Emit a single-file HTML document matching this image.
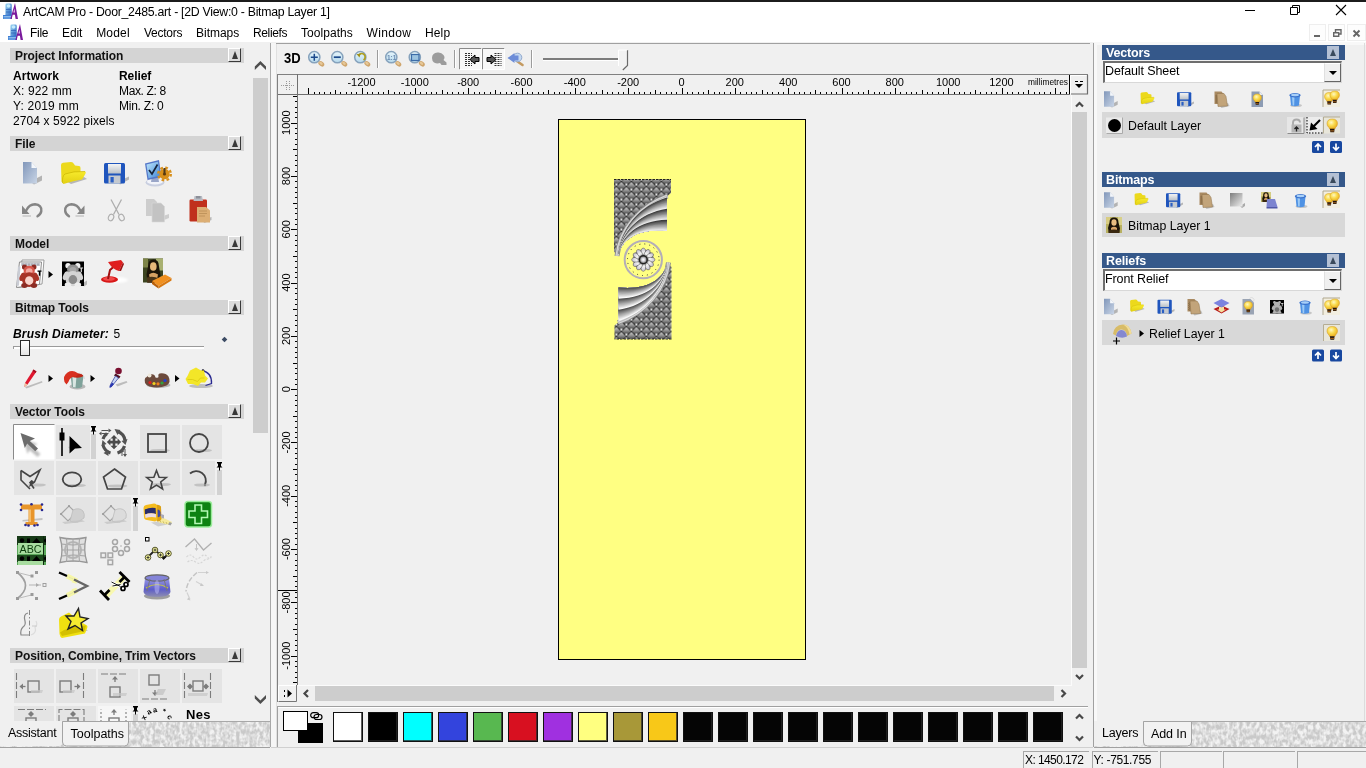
<!DOCTYPE html><html><head><meta charset="utf-8"><title>ArtCAM Pro - Door_2485.art</title><style>
*{box-sizing:border-box;margin:0;padding:0}
html,body{width:1366px;height:768px;overflow:hidden;background:#f0f0f0;font-family:"Liberation Sans",sans-serif;color:#000}
.a{position:absolute}
.t{position:absolute;white-space:nowrap;line-height:1}
svg{position:absolute;overflow:visible}
.hdr{position:absolute;height:15px;background:#d4d4d4;font-weight:bold;font-size:12px;line-height:17px;overflow:hidden;padding-left:5px;color:#111;letter-spacing:-0.1px}
.hdrb{position:absolute;height:15px;background:#35588a;font-weight:bold;font-size:12.5px;line-height:16.500px;overflow:hidden;padding-left:4px;color:#fff;letter-spacing:-0.15px}
.cb{position:absolute;width:13px;height:14px;background:#dcdcdc;border-right:1px solid #3a3a3a;border-bottom:1px solid #3a3a3a;border-top:1px solid #fff;border-left:1px solid #fff}
.cb:after{content:"";position:absolute;left:2.500px;top:2px;border-left:3.5px solid transparent;border-right:3.5px solid transparent;border-bottom:8px solid #383838}
.cbb{position:absolute;width:12px;height:13px;background:#b4c0d4}
.cbb:after{content:"";position:absolute;left:2.500px;top:2.500px;border-left:3.5px solid transparent;border-right:3.5px solid transparent;border-bottom:7.500px solid #3a4a5c}
.combo{position:absolute;height:22px;background:#fff;border-top:2px solid #6e6e6e;border-left:2px solid #6e6e6e;border-right:1px solid #d8d8d8;border-bottom:1px solid #d8d8d8}
.dd{position:absolute;width:17px;height:19px;background:#f0f0f0;border-right:1.500px solid #666;border-bottom:1.500px solid #666;border-top:1px solid #fff;border-left:1px solid #e0e0e0}
.dd:after{content:"";position:absolute;left:4px;top:7px;border-left:4px solid transparent;border-right:4px solid transparent;border-top:4px solid #000}
.sp{position:absolute;height:17px;top:751px;border-top:1px solid #a8a8a8;border-left:1px solid #a8a8a8;background:#f0f0f0}
</style></head><body><div id="root" style="position:absolute;left:0;top:0;width:1366px;height:768px;will-change:transform">
<div class="a" style="left:0px;top:0px;width:1366px;height:42px;background:#fff;"></div>
<div class="a" style="left:0px;top:0px;width:1366px;height:2px;background:#1c1c1c;"></div>
<div class="t" style="left:23px;top:6px;font-size:12.3px;letter-spacing:-0.274px;">ArtCAM Pro - Door_2485.art - [2D View:0 - Bitmap Layer 1]</div>
<svg style="left:2.500px;top:3px" width="16" height="16"><defs><linearGradient id="gApp" x1="0" y1="0" x2="1" y2="1"><stop offset="0" stop-color="#9cd8f4"/><stop offset="1" stop-color="#2a62c0"/></linearGradient></defs><path d="M3.800 0.500h3.600q1.400 0 1.400 1.400v10.600h-6.400v-10.600q0-1.400 1.400-1.400z" fill="url(#gApp)"/><ellipse cx="5.600" cy="3" rx="1.900" ry="1.700" fill="#c4ecfc"/><path d="M3 6.500h5M3 9h5" stroke="#2a5cb0" stroke-width=".7"/><rect x="0" y="12" width="9" height="4" fill="#3c7cd4"/><path d="M0.500 13.500h8M0.500 15h8" stroke="#a8d4f4" stroke-width=".7"/><path d="M7.300 16l4.700-16 3 16h-2.400l-0.700-4.200h-2.200l-1 4.200z M10.500 9.500h1.300l-0.500-4z" fill="#7a1a9c" fill-rule="evenodd"/></svg>
<svg style="left:7.500px;top:24px" width="16" height="16"><path d="M3.800 0.500h3.600q1.400 0 1.400 1.400v10.600h-6.400v-10.600q0-1.400 1.400-1.400z" fill="url(#gApp)"/><ellipse cx="5.600" cy="3" rx="1.900" ry="1.700" fill="#c4ecfc"/><path d="M3 6.500h5M3 9h5" stroke="#2a5cb0" stroke-width=".7"/><rect x="0" y="12" width="9" height="4" fill="#3c7cd4"/><path d="M0.500 13.500h8M0.500 15h8" stroke="#a8d4f4" stroke-width=".7"/><path d="M7.300 16l4.700-16 3 16h-2.400l-0.700-4.200h-2.200l-1 4.200z M10.500 9.500h1.300l-0.500-4z" fill="#7a1a9c" fill-rule="evenodd"/></svg>
<div class="a" style="left:1245px;top:10px;width:10px;height:1px;background:#000;"></div>
<svg style="left:1290px;top:5px" width="10" height="10"><path d="M0.5 2.5h7v7h-7z M2.5 2.500v-2h7v7h-2" fill="none" stroke="#000" stroke-width="1"/></svg>
<svg style="left:1336px;top:5px" width="10" height="10"><path d="M0 0L10 10M10 0L0 10" stroke="#000" stroke-width="1.100"/></svg>
<div class="t" style="left:30px;top:26.5px;font-size:12px;letter-spacing:-0.284px;">File</div>
<div class="t" style="left:62px;top:26.5px;font-size:12px;letter-spacing:-0.095px;">Edit</div>
<div class="t" style="left:96.2px;top:26.5px;font-size:12px;letter-spacing:0.183px;">Model</div>
<div class="t" style="left:144px;top:26.5px;font-size:12px;letter-spacing:-0.260px;">Vectors</div>
<div class="t" style="left:196px;top:26.5px;font-size:12px;letter-spacing:-0.021px;">Bitmaps</div>
<div class="t" style="left:253px;top:26.5px;font-size:12px;letter-spacing:-0.369px;">Reliefs</div>
<div class="t" style="left:301px;top:26.5px;font-size:12px;letter-spacing:0.048px;">Toolpaths</div>
<div class="t" style="left:366.6px;top:26.5px;font-size:12px;letter-spacing:0.320px;">Window</div>
<div class="t" style="left:425px;top:26.5px;font-size:12px;letter-spacing:0.130px;">Help</div>
<div class="a" style="left:1309px;top:24px;width:17px;height:17px;background:#fdfdfd;border:1px solid #eeeeee"></div>
<div class="a" style="left:1328px;top:24px;width:17px;height:17px;background:#fdfdfd;border:1px solid #eeeeee"></div>
<div class="a" style="left:1347px;top:24px;width:19px;height:17px;background:#fdfdfd;border:1px solid #eeeeee"></div>
<div class="a" style="left:1314px;top:35px;width:6px;height:2px;background:#666;"></div>
<svg style="left:1333px;top:29px" width="9" height="8"><path d="M0.7 3.700h5v3.600h-5z M2.500 3v-2.300h5.500v4.300h-2" fill="none" stroke="#666" stroke-width="1.400"/></svg>
<svg style="left:1353px;top:30px" width="7" height="7"><path d="M0.500 0.500L6.500 6.500M6.500 0.500L0.500 6.500" stroke="#666" stroke-width="1.900"/></svg>
<div class="a" style="left:0px;top:42px;width:270px;height:705px;background:#f0f0f0;"></div>
<div class="a" style="left:270px;top:43px;width:1px;height:704px;background:#a8a8a8;"></div>
<div class="a" style="left:271px;top:43px;width:5px;height:704px;background:#f6f6f6;"></div>
<div class="hdr" style="left:10px;top:48px;width:234px">Project Information</div>
<div class="cb" style="left:228px;top:48px"></div>
<div class="t" style="left:13px;top:70px;font-size:12px;letter-spacing:0.109px;;font-weight:bold">Artwork</div>
<div class="t" style="left:119px;top:70px;font-size:12px;letter-spacing:-0.063px;;font-weight:bold">Relief</div>
<div class="t" style="left:13px;top:85px;font-size:12px;letter-spacing:0.087px;">X: 922 mm</div>
<div class="t" style="left:119px;top:85px;font-size:12px;letter-spacing:-0.368px;">Max. Z: 8</div>
<div class="t" style="left:13px;top:100px;font-size:12px;letter-spacing:0.177px;">Y: 2019 mm</div>
<div class="t" style="left:119px;top:100px;font-size:12px;letter-spacing:-0.242px;">Min. Z: 0</div>
<div class="t" style="left:13px;top:115px;font-size:12px;letter-spacing:0.085px;">2704 x 5922 pixels</div>
<div class="hdr" style="left:10px;top:136px;width:234px">File</div>
<div class="cb" style="left:228px;top:136px"></div>
<div class="hdr" style="left:10px;top:236px;width:234px">Model</div>
<div class="cb" style="left:228px;top:236px"></div>
<div class="hdr" style="left:10px;top:300px;width:234px">Bitmap Tools</div>
<div class="cb" style="left:228px;top:300px"></div>
<div class="t" style="left:13px;top:327.5px;font-size:12px;font-weight:bold;font-style:italic;letter-spacing:0.17px">Brush Diameter:</div>
<div class="t" style="left:113.5px;top:327.5px;font-size:12px;">5</div>
<div class="a" style="left:13px;top:346px;width:191px;height:1px;background:#9a9a9a;"></div>
<div class="a" style="left:13px;top:347px;width:191px;height:2px;background:#fff;"></div>
<div class="a" style="left:13px;top:346px;width:1px;height:3px;background:#9a9a9a;"></div>
<div class="a" style="left:20px;top:340px;width:10px;height:16px;background:#f8f8f8;border:1px solid #2a2a2a;background:linear-gradient(#fff,#e4e4e4)"></div>
<div class="a" style="left:222px;top:337px;width:5px;height:5px;background:#3c4c64;transform:rotate(45deg) scale(.8)"></div>
<div class="hdr" style="left:10px;top:404px;width:234px">Vector Tools</div>
<div class="cb" style="left:228px;top:404px"></div>
<div class="hdr" style="left:10px;top:648px;width:234px">Position, Combine, Trim Vectors</div>
<div class="cb" style="left:228px;top:648px"></div>
<div class="a" style="left:253px;top:78px;width:15px;height:355px;background:#cdcdcd;"></div>
<svg style="left:0;top:0" width="280" height="768"><path d="M260.400 61L266 66.600V70L260.400 64.600L254.800 70V66.600z" fill="#4e4e4e"/><path d="M260.400 704L266 698.400V695L260.400 700.400L254.800 695V698.400z" fill="#4e4e4e"/></svg>
<div class="a" style="left:276px;top:43px;width:814px;height:1px;background:#a0a0a0;"></div>
<div class="a" style="left:276px;top:44px;width:1px;height:703px;background:#e0e0e0;"></div>
<div class="t" style="left:284px;top:50px;font-size:15.5px;font-weight:bold;transform:scaleX(.84);transform-origin:0 0">3D</div>
<div class="a" style="left:277px;top:74px;width:811px;height:1px;background:#808080;"></div>
<div class="a" style="left:277px;top:94px;width:793px;height:1px;background:#707070;"></div>
<div class="a" style="left:277px;top:74px;width:1px;height:628px;background:#808080;"></div>
<div class="a" style="left:297px;top:74px;width:1px;height:611px;background:#707070;"></div>
<div class="a" style="left:298px;top:95px;width:773px;height:590px;background:#f0f0f0;"></div>
<div class="a" style="left:558px;top:119px;width:248px;height:541px;background:#ffff82;border:1px solid #000"></div>
<div class="a" style="left:1071px;top:95px;width:1px;height:591px;background:#fbfbfb;"></div>
<div class="a" style="left:298px;top:685px;width:774px;height:1px;background:#fbfbfb;"></div>
<div class="a" style="left:1072px;top:112px;width:15px;height:556px;background:#cdcdcd;"></div>
<div class="a" style="left:315px;top:686px;width:739px;height:15px;background:#cdcdcd;"></div>
<div class="a" style="left:277px;top:706px;width:811px;height:1px;background:#a0a0a0;"></div>
<div class="a" style="left:277px;top:707px;width:811px;height:1px;background:#fff;"></div>
<div class="a" style="left:277px;top:706px;width:1px;height:41px;background:#a0a0a0;"></div>
<div class="a" style="left:271px;top:747px;width:822px;height:1px;background:#d0d0d0;"></div>
<div class="a" style="left:298px;top:723px;width:25px;height:20px;background:#000;"></div>
<div class="a" style="left:283px;top:711px;width:25px;height:20px;background:#fff;border:1px solid #000"></div>
<svg style="left:310px;top:712px" width="14" height="9"><rect x="0.700" y="0.700" width="8" height="5" rx="2.500" fill="none" stroke="#000" stroke-width="1.200"/><rect x="4" y="2.500" width="8" height="5" rx="2.500" fill="none" stroke="#000" stroke-width="1.200"/></svg>
<div class="a" style="left:333px;top:712px;width:30px;height:30px;background:#ffffff;border:1px solid #111;box-shadow:inset -1px -1px 0 rgba(40,40,40,.75)"></div>
<div class="a" style="left:368px;top:712px;width:30px;height:30px;background:#000000;border:1px solid #111;box-shadow:inset -1px -1px 0 rgba(40,40,40,.75)"></div>
<div class="a" style="left:403px;top:712px;width:30px;height:30px;background:#00ffff;border:1px solid #111;box-shadow:inset -1px -1px 0 rgba(40,40,40,.75)"></div>
<div class="a" style="left:438px;top:712px;width:30px;height:30px;background:#3344dd;border:1px solid #111;box-shadow:inset -1px -1px 0 rgba(40,40,40,.75)"></div>
<div class="a" style="left:473px;top:712px;width:30px;height:30px;background:#58b850;border:1px solid #111;box-shadow:inset -1px -1px 0 rgba(40,40,40,.75)"></div>
<div class="a" style="left:508px;top:712px;width:30px;height:30px;background:#d81020;border:1px solid #111;box-shadow:inset -1px -1px 0 rgba(40,40,40,.75)"></div>
<div class="a" style="left:543px;top:712px;width:30px;height:30px;background:#a030e0;border:1px solid #111;box-shadow:inset -1px -1px 0 rgba(40,40,40,.75)"></div>
<div class="a" style="left:578px;top:712px;width:30px;height:30px;background:#ffff80;border:1px solid #111;box-shadow:inset -1px -1px 0 rgba(40,40,40,.75)"></div>
<div class="a" style="left:613px;top:712px;width:30px;height:30px;background:#a89838;border:1px solid #111;box-shadow:inset -1px -1px 0 rgba(40,40,40,.75)"></div>
<div class="a" style="left:648px;top:712px;width:30px;height:30px;background:#f8c818;border:1px solid #111;box-shadow:inset -1px -1px 0 rgba(40,40,40,.75)"></div>
<div class="a" style="left:683px;top:712px;width:30px;height:30px;background:#050505;border:1px solid #111;box-shadow:inset -1px -1px 0 rgba(40,40,40,.75)"></div>
<div class="a" style="left:718px;top:712px;width:30px;height:30px;background:#050505;border:1px solid #111;box-shadow:inset -1px -1px 0 rgba(40,40,40,.75)"></div>
<div class="a" style="left:753px;top:712px;width:30px;height:30px;background:#050505;border:1px solid #111;box-shadow:inset -1px -1px 0 rgba(40,40,40,.75)"></div>
<div class="a" style="left:788px;top:712px;width:30px;height:30px;background:#050505;border:1px solid #111;box-shadow:inset -1px -1px 0 rgba(40,40,40,.75)"></div>
<div class="a" style="left:823px;top:712px;width:30px;height:30px;background:#050505;border:1px solid #111;box-shadow:inset -1px -1px 0 rgba(40,40,40,.75)"></div>
<div class="a" style="left:858px;top:712px;width:30px;height:30px;background:#050505;border:1px solid #111;box-shadow:inset -1px -1px 0 rgba(40,40,40,.75)"></div>
<div class="a" style="left:893px;top:712px;width:30px;height:30px;background:#050505;border:1px solid #111;box-shadow:inset -1px -1px 0 rgba(40,40,40,.75)"></div>
<div class="a" style="left:928px;top:712px;width:30px;height:30px;background:#050505;border:1px solid #111;box-shadow:inset -1px -1px 0 rgba(40,40,40,.75)"></div>
<div class="a" style="left:963px;top:712px;width:30px;height:30px;background:#050505;border:1px solid #111;box-shadow:inset -1px -1px 0 rgba(40,40,40,.75)"></div>
<div class="a" style="left:998px;top:712px;width:30px;height:30px;background:#050505;border:1px solid #111;box-shadow:inset -1px -1px 0 rgba(40,40,40,.75)"></div>
<div class="a" style="left:1033px;top:712px;width:30px;height:30px;background:#050505;border:1px solid #111;box-shadow:inset -1px -1px 0 rgba(40,40,40,.75)"></div>
<div class="a" style="left:1094px;top:42px;width:272px;height:3px;background:#f8f8f8;"></div>
<div class="a" style="left:1093px;top:43px;width:1px;height:704px;background:#a0a0a0;"></div>
<div class="a" style="left:1094px;top:43px;width:3px;height:704px;background:#f8f8f8;"></div>
<div class="a" style="left:1364px;top:43px;width:1px;height:678px;background:#dcdcdc;"></div>
<div class="hdrb" style="left:1102px;top:45px;width:243px">Vectors</div>
<div class="cbb" style="left:1327px;top:46px"></div>
<div class="hdrb" style="left:1102px;top:172px;width:243px">Bitmaps</div>
<div class="cbb" style="left:1327px;top:173px"></div>
<div class="hdrb" style="left:1102px;top:253px;width:243px">Reliefs</div>
<div class="cbb" style="left:1327px;top:254px"></div>
<div class="combo" style="left:1103px;top:61px;width:239px"></div>
<div class="dd" style="left:1324px;top:63px"></div>
<div class="t" style="left:1105px;top:65px;font-size:12.5px;letter-spacing:-0.1px">Default Sheet</div>
<div class="combo" style="left:1103px;top:269px;width:239px"></div>
<div class="dd" style="left:1324px;top:271px"></div>
<div class="t" style="left:1105px;top:273px;font-size:12.5px;letter-spacing:-0.1px">Front Relief</div>
<div class="a" style="left:1102px;top:112px;width:243px;height:26px;background:#d8d8d8;"></div>
<div class="t" style="left:1128px;top:120px;font-size:12.3px;">Default Layer</div>
<div class="a" style="left:1102px;top:213px;width:243px;height:24px;background:#d8d8d8;"></div>
<div class="t" style="left:1128px;top:220px;font-size:12.3px;">Bitmap Layer 1</div>
<div class="a" style="left:1102px;top:320px;width:243px;height:25px;background:#d8d8d8;"></div>
<div class="t" style="left:1149px;top:328px;font-size:12.3px;">Relief Layer 1</div>
<svg style="left:0;top:0" width="1366" height="768"><defs><filter id="noise" x="0" y="0" width="100%" height="100%"><feTurbulence type="fractalNoise" baseFrequency="0.3 0.2" numOctaves="2" seed="3"/><feColorMatrix type="matrix" values="0 0 0 0 0.89  0 0 0 0 0.89  0 0 0 0 0.89  2 2 0 0 -1.55"/><feComposite in2="SourceGraphic" operator="in"/></filter></defs><rect x="0" y="721" width="270" height="26" fill="#c9c9c9"/><rect x="0" y="721" width="270" height="26" fill="#c4c4c4" filter="url(#noise)"/><rect x="0" y="721" width="270" height="1" fill="#a8a8a8"/><rect x="1094" y="721" width="272" height="26" fill="#c9c9c9"/><rect x="1094" y="721" width="272" height="26" fill="#c4c4c4" filter="url(#noise)"/><rect x="1094" y="721" width="272" height="1" fill="#a8a8a8"/><path d="M0 721h62.500v21q0 4-4 4h-58.500z" fill="#f0f0f0"/><path d="M62.500 721.500h66v20.500q0 4-4 4h-58q-4 0-4-4z" fill="#f2f2f2" stroke="#a4a4a4"/><path d="M1094 721h49.500v21q0 4-4 4h-45.500z" fill="#f0f0f0"/><path d="M1143.500 721.500h48v20.500q0 4-4 4h-40q-4 0-4-4z" fill="#f2f2f2" stroke="#a4a4a4"/><rect x="0" y="747" width="270" height="1" fill="#a0a0a0"/><rect x="1094" y="747" width="272" height="1" fill="#a0a0a0"/></svg>
<div class="t" style="left:8px;top:727px;font-size:12.5px;letter-spacing:-0.25px">Assistant</div>
<div class="t" style="left:70.5px;top:728px;font-size:12.5px;letter-spacing:0px">Toolpaths</div>
<div class="t" style="left:1102px;top:727px;font-size:12.5px;letter-spacing:-0.2px">Layers</div>
<div class="t" style="left:1151px;top:728px;font-size:12.5px;letter-spacing:-0.1px">Add In</div>
<div class="a" style="left:0px;top:748px;width:1366px;height:20px;background:#f0f0f0;"></div>
<div class="sp" style="left:1023px;width:66px"></div>
<div class="sp" style="left:1092px;width:66px"></div>
<div class="sp" style="left:1160px;width:62px"></div>
<div class="sp" style="left:1223px;width:72px"></div>
<div class="sp" style="left:1297px;width:69px"></div>
<div class="t" style="left:1025px;top:754px;font-size:12px;letter-spacing:-0.584px;">X: 1450.172</div>
<div class="t" style="left:1093.5px;top:754px;font-size:12px;letter-spacing:-0.344px;">Y: -751.755</div>
<svg style="left:0;top:0" width="1366" height="768" viewBox="0 0 1366 768"><defs>
<linearGradient id="gDoc" x1="0" y1="0" x2="1" y2="1"><stop offset="0" stop-color="#8197ba"/><stop offset="1" stop-color="#c9d5e6"/></linearGradient>
<linearGradient id="gFold" x1="0" y1="0" x2="0" y2="1"><stop offset="0" stop-color="#f7ea2c"/><stop offset="1" stop-color="#e2cf12"/></linearGradient>
<linearGradient id="gFlop" x1="0" y1="0" x2="0" y2="1"><stop offset="0" stop-color="#f4f4f4"/><stop offset="1" stop-color="#b9c0c8"/></linearGradient>
<linearGradient id="gScr" x1="0" y1="0" x2="1" y2="1"><stop offset="0" stop-color="#bfe6fb"/><stop offset="1" stop-color="#3f86d8"/></linearGradient>
<radialGradient id="gBulb" cx="0.4" cy="0.35" r="0.7"><stop offset="0" stop-color="#fff8c4"/><stop offset="0.45" stop-color="#fadc50"/><stop offset="1" stop-color="#e8a818"/></radialGradient>
<linearGradient id="gGray" x1="0" y1="0" x2="1" y2="1"><stop offset="0" stop-color="#7d7d7d"/><stop offset="1" stop-color="#efefef"/></linearGradient>
<linearGradient id="gDish" x1="0" y1="0" x2="0" y2="1"><stop offset="0" stop-color="#9a9ae6"/><stop offset="0.6" stop-color="#5d5dc8"/><stop offset="1" stop-color="#8f8fb0"/></linearGradient>
<linearGradient id="gZoom" x1="0" y1="0" x2="0" y2="1"><stop offset="0" stop-color="#e8f6fc"/><stop offset="1" stop-color="#b5d9ec"/></linearGradient>
<filter id="soft" x="-20%" y="-20%" width="140%" height="140%"><feGaussianBlur stdDeviation="0.45"/></filter>
<filter id="soft2" x="-30%" y="-30%" width="160%" height="160%"><feGaussianBlur stdDeviation="0.9"/></filter>
</defs><g transform="translate(23,161.5) scale(1.0)"><path d="M7 20l12-6v5l-8 4z" fill="#a9a9a9" opacity=".85" filter="url(#soft)"/>
<path d="M0 0.5h8.5l5.5 6v15.5h-14z" fill="url(#gDoc)"/><path d="M8.5 0.5l5.5 6h-5.5z" fill="#f4f7fb"/></g>
<g transform="translate(60,162) scale(1.0)"><path d="M6 19l18-4 3 2-16 5z" fill="#a8a8a8" opacity=".8" filter="url(#soft)"/>
<path d="M1 3q0-2 2-2.3l8-0.7q2 0 3 2l1 1.5 4 0.5q1.5 0.2 1.5 2v8l-19 6z" fill="#ecd91c"/>
<path d="M2.5 21q-0.5-7 2.5-9 8-3 20-2.5 1.5 0.2 0.5 2-2 4-3.5 6-8 1-18.500 4.5z" fill="url(#gFold)"/>
<path d="M2.5 21q-0.5-7 2.5-9 8-3 20-2.500" fill="none" stroke="#c8b400" stroke-width=".7"/></g>
<g transform="translate(104,162.5) scale(1.0)"><path d="M14 19l11-5v3l-9 5z" fill="#a8a8a8" opacity=".8" filter="url(#soft)"/>
<rect x="0" y="0.5" width="21" height="20.5" rx="1.500" fill="#1f55bd"/>
<rect x="4" y="1.5" width="13" height="9.500" fill="url(#gFlop)"/>
<rect x="4.500" y="13" width="12" height="8" fill="#c4c9cf"/>
<rect x="6.500" y="14.500" width="3.200" height="5.500" fill="#2a5fc4"/></g>
<g transform="translate(144,160)" >
<ellipse cx="11" cy="22.500" rx="9.500" ry="4" fill="#c9cfe0"/><ellipse cx="11" cy="21.500" rx="8" ry="3" fill="#f2f4fa"/>
<path d="M8 16h6l1 6h-8z" fill="#9aa6c8"/>
<path d="M1 3.500l14-3.500 2.500 17-14 3z" fill="#5577c8"/>
<path d="M2.500 4.500l11.500-2.800 2 14-11.500 2.500z" fill="url(#gScr)"/>
<path d="M5 10l3 4 5.500-9.500" fill="none" stroke="#16243c" stroke-width="1.700"/>
<g transform="translate(20.500,14)"><circle r="5.200" fill="#d8901c"/><circle r="6.300" fill="none" stroke="#d8901c" stroke-width="2.400" stroke-dasharray="2.600 2.350"/><circle r="1.600" fill="#5a3a10"/><path d="M-1-6h2v5h-2z" fill="#4a3a20"/></g>
</g>
<g transform="translate(21,203)" ><path d="M1.500 12.300h8.500v1.400h-8.500z" fill="#bcbcbc" opacity=".8"/>
<path d="M1 2.500v8.500h7.500z" fill="#858585"/>
<path d="M5.500 7Q8 1.500 14 1.300Q21 2 20.300 8Q20 11 16.500 13.300" fill="none" stroke="#858585" stroke-width="2.400" stroke-linecap="round"/></g>
<g transform="translate(85.500,203) scale(-1,1)"><path d="M1.500 12.300h8.500v1.400h-8.500z" fill="#bcbcbc" opacity=".8"/>
<path d="M1 2.500v8.500h7.500z" fill="#858585"/>
<path d="M5.500 7Q8 1.500 14 1.300Q21 2 20.300 8Q20 11 16.500 13.300" fill="none" stroke="#858585" stroke-width="2.400" stroke-linecap="round"/></g>
<g transform="translate(107,199.5)" ><path d="M4 0l8 15M14.500 0l-8 15" stroke="#aeaeae" stroke-width="1.300" fill="none"/>
<ellipse cx="4" cy="18" rx="2.600" ry="3.300" fill="none" stroke="#aeaeae" stroke-width="1.200" transform="rotate(25 4 18)"/>
<ellipse cx="14.500" cy="18" rx="2.600" ry="3.300" fill="none" stroke="#aeaeae" stroke-width="1.200" transform="rotate(-25 14.500 18)"/></g>
<g transform="translate(146,199)" ><path d="M8 20l15-5v4l-10 4z" fill="#c4c4c4" opacity=".8"/>
<path d="M0 0h8l3 3v14h-11z" fill="#cdcdcd"/><path d="M6 4h9l3.500 3.500v15.500h-12.500z" fill="#c3c3c3" stroke="#d9d9d9" stroke-width=".6"/></g>
<g transform="translate(189.5,196)" ><path d="M12 24l10-3v3l-7 3z" fill="#aaa" opacity=".8"/>
<rect x="0" y="3.500" width="17.500" height="22" rx="1.200" fill="#c0301c"/>
<path d="M5 0h7.500l1 5h-9.500z" fill="#b9bcc4"/><rect x="6.500" y="0" width="4.500" height="2.500" fill="#8c8f98"/>
<path d="M7.500 11h9l4 3.500v12h-13z" fill="#dcae74"/><path d="M9.500 15h8M9.500 17.500h8M9.500 20h6" stroke="#b98d55" stroke-width=".8"/></g>
<g transform="translate(15,258.5)" >
<path d="M7 1.500l22 0-2 24-24 3.500z" fill="#fff" stroke="#9a9a9a" stroke-width="1"/>
<path d="M4.500 3.500l22 0-2 22.500-23 3z" fill="#fff" stroke="#8c8c8c" stroke-width="1"/>
<path d="M6 4.500h19v3h-19z" fill="#c9ccd4"/><path d="M8 5v2M11 5v2M14 5v2M17 5v2M20 5v2M23 5v2" stroke="#666" stroke-width=".6"/>
<path d="M3 8l2.500 0-1.500 19-2.500 0.500z" fill="#c9ccd4"/>
<g transform="translate(5.8,6) scale(1.12)" fill="#a83428">
<circle cx="3.300" cy="2.300" r="2.300" fill="#8c2c24"/><circle cx="11.700" cy="2.300" r="2.300" fill="#8c2c24"/><ellipse cx="7.500" cy="5.500" rx="5" ry="4.300" fill="#d8584c"/><ellipse cx="7.500" cy="6" rx="3" ry="2.600" fill="#f4a8a0"/>
<ellipse cx="7.500" cy="13.500" rx="6.500" ry="6.500"/><ellipse cx="1.500" cy="11" rx="2.300" ry="4" transform="rotate(25 1.500 11)"/><ellipse cx="13.500" cy="11" rx="2.300" ry="4" transform="rotate(-25 13.500 11)"/>
<ellipse cx="3.300" cy="18.700" rx="2.900" ry="2.200" fill="#8c2c24"/><ellipse cx="11.700" cy="18.700" rx="2.900" ry="2.200" fill="#8c2c24"/>
<ellipse cx="7.500" cy="14.300" rx="3.700" ry="3.900" fill="#f8d4cc"/></g><path d="M22.500 12h4v1.200h-1.300v4h-1.400v-4h-1.300z" fill="#000"/></g>
<path d="M48.5 271l4.500 3.500-4.500 3.500z" fill="#000"/>
<g transform="translate(62,261.5)" ><path d="M20 22l5-3v4l-3 2z" fill="#aaa" opacity=".8"/><rect x="0" y="0" width="22" height="24.500" fill="#000"/><g transform="translate(2.2,1.5) scale(1.16)" fill="#d4d4d4">
<circle cx="3.300" cy="2.300" r="2.300" fill="#eeeeee"/><circle cx="11.700" cy="2.300" r="2.300" fill="#eeeeee"/><ellipse cx="7.500" cy="5.500" rx="5" ry="4.300" fill="#909090"/><ellipse cx="7.500" cy="6" rx="3" ry="2.600" fill="#a8a8a8"/>
<ellipse cx="7.500" cy="13.500" rx="6.500" ry="6.500"/><ellipse cx="1.500" cy="11" rx="2.300" ry="4" transform="rotate(25 1.500 11)"/><ellipse cx="13.500" cy="11" rx="2.300" ry="4" transform="rotate(-25 13.500 11)"/>
<ellipse cx="3.300" cy="18.700" rx="2.900" ry="2.200" fill="#eeeeee"/><ellipse cx="11.700" cy="18.700" rx="2.900" ry="2.200" fill="#eeeeee"/>
<ellipse cx="7.500" cy="14.300" rx="3.700" ry="3.900" fill="#8a8a8a"/></g><path d="M17.500 6h3.600v1.100h-1.200v3.600h-1.200v-3.600h-1.200z" fill="#ddd"/></g>
<g transform="translate(100,260)" >
<ellipse cx="17" cy="20" rx="11" ry="3" fill="#fff" opacity=".9" filter="url(#soft2)"/>
<ellipse cx="9.500" cy="19.500" rx="8.500" ry="3.200" fill="#d81818"/><ellipse cx="9" cy="18.800" rx="6" ry="2" fill="#f04a4a"/>
<path d="M8 19l2-9 4.500-4" fill="none" stroke="#a01010" stroke-width="2"/>
<path d="M8 2l13-2 2 2.500-4 8.500q-6-1-11-9z" fill="#e02020"/><path d="M19 11l4-8.500 1 1.500-3 7z" fill="#9a1010"/></g>
<g transform="translate(143,258.5)" >
<rect x="0" y="0" width="20" height="24" fill="#3c4420"/><rect x="13" y="0" width="7" height="12" fill="#a8b070"/><rect x="0" y="0" width="5" height="9" fill="#7d8448"/>
<path d="M5 8q0-7 5.500-7 5.500 0 5.500 7l1.500 9-2 7h-11l-1-8z" fill="#1c1408"/>
<ellipse cx="10.300" cy="8" rx="3.300" ry="4.300" fill="#e6b87a"/><path d="M6 16q4-3.500 9 0l-1 5h-7z" fill="#d6a062"/>
<path d="M4 19q6-2 12 1l0 4h-12z" fill="#4a3418"/>
<path d="M9 22.500l13-6.500 6.500 3.500-13 8z" fill="#f09020"/><path d="M9 22.500l6.500 5 0 2.500-6.500-4.500z" fill="#b85e08"/><path d="M15.500 27.500l13-8v2.500l-13 8z" fill="#d87810"/></g>
<g transform="translate(24,369)" ><path d="M1 18l17-6 0.500 1.500-16 6z" fill="#b0b0b0" opacity=".8" filter="url(#soft)"/>
<path d="M9.500 0.500l3 2-9 13-3 2.500 0.500-4z" fill="#e01830"/><path d="M0.500 18l0.500-4 2.500 1.500z" fill="#f0c8a0"/><path d="M9.500 0.500l3 2-1 1.500-3-2z" fill="#a01020"/></g>
<path d="M48.5 375l4.500 3.500-4.500 3.500z" fill="#000"/>
<g transform="translate(63.5,370)" ><ellipse cx="14" cy="16.500" rx="8" ry="3" fill="#a9a9a9" opacity=".8" filter="url(#soft)"/>
<path d="M7 5l13 1-1.500 11q-5 2.500-10 0z" fill="#7fa29a"/><path d="M9 6l4 0.500-1 11-2.500-0.500z" fill="#d9e6e2"/>
<ellipse cx="13.500" cy="5.500" rx="6.500" ry="2.200" fill="#c02818"/>
<path d="M1 12q-2-6 3-9.500 5-3 10 0.500 1 2-2 3.500-4 0-6 3-1 3-3 5z" fill="#d83020"/>
<path d="M16 3q5 1 5 6" fill="none" stroke="#ddd" stroke-width="1"/></g>
<path d="M90.5 375l4.500 3.500-4.500 3.500z" fill="#000"/>
<g transform="translate(107.5,367.5)" ><path d="M8 17l11-3.500 1 1.500-10 4z" fill="#b0b0b0" opacity=".8" filter="url(#soft)"/>
<circle cx="11" cy="3.500" r="3.300" fill="#7a1030"/><path d="M8 6l5 3-1.500 2-5-3z" fill="#501020"/>
<path d="M8 8.500l3 2-6.500 8-2 1 0.500-2.500z" fill="#c9d6f4" stroke="#3a48a0" stroke-width=".8"/><path d="M4.500 15l2 1.500-2.500 3-2 1 0.500-2.500z" fill="#2a38b0"/></g>
<g transform="translate(143.5,369)" ><ellipse cx="15" cy="16" rx="12" ry="3" fill="#a9a9a9" opacity=".8" filter="url(#soft)"/>
<path d="M2 8q-3 7 4 9.500 9 2.500 17-1 5-3 2-9-3-4-9-3-2 1-1 3 0 2-3 1-1-4-5-3-3 1-5 3.500z" fill="#6c4a3c"/>
<circle cx="6" cy="6.500" r="2" fill="#efe9dc"/><circle cx="6.500" cy="13.500" r="1.600" fill="#e02020"/><circle cx="10.500" cy="14.500" r="1.600" fill="#f0d020"/>
<circle cx="14.500" cy="14.800" r="1.600" fill="#f08020"/><circle cx="18.500" cy="14" r="1.600" fill="#30a040"/><circle cx="21.500" cy="11.500" r="1.600" fill="#2040d0"/></g>
<path d="M175 375l4.500 3.500-4.500 3.500z" fill="#000"/>
<g transform="translate(185,367.5)" ><ellipse cx="16" cy="18.500" rx="12" ry="2" fill="#a9a9a9" opacity=".7" filter="url(#soft)"/>
<path d="M17 3q10 2 9.500 13l-6 2" fill="none" stroke="#2a2a90" stroke-width="1.300"/><circle cx="18" cy="3" r="1.300" fill="#223"/>
<path d="M5 3l6-3 5 3 3 0 1 5 3 3-3 4-4 0-3 3.500-5-2-5 0-2.500-5 2-3z" fill="#f3e628"/><path d="M2.500 12l5 0 5 2 3-3.500 4 0" fill="none" stroke="#d8c810" stroke-width=".8"/></g>
<rect x="13.500" y="424.500" width="41" height="35" fill="#fff"/><path d="M13.500 459.500v-35h41" fill="none" stroke="#8a8a8a"/>
<g transform="translate(20.5,433)" ><path d="M3 6l14 5-5 3 8 7-3 3-8-7-2 4z" fill="#b8b8b8" opacity=".9" filter="url(#soft2)"/>
<path d="M0 0l14.500 5.500-5.200 2.500 8.200 7.500-2.800 2.800-8-7.800-2.400 4.500z" fill="#6c6c6c"/></g>
<rect x="56" y="425" width="34" height="34" fill="#e4e4e4"/>
<g transform="translate(58,427)" ><path d="M10 20l8-2 4 3-9 2z" fill="#b4b4b4" opacity=".7" filter="url(#soft)"/>
<rect x="3.200" y="1" width="1.600" height="28" fill="#000"/><rect x="1.500" y="5.500" width="5" height="8" fill="#000"/>
<path d="M11.500 9l12.500 12-7 0.500-5.500 5z" fill="#000"/></g>
<rect x="91" y="434" width="5" height="25" fill="#d2d2d2"/>
<path d="M91 426h5v1.500h-1v2.500l1.500 1.500h-2.500v3h-1v-3h-2.500l1.500-1.500v-2.500h-1z" fill="#000"/>
<g transform="translate(99.5,427)" ><g fill="none" stroke="#505050" stroke-width="3.200">
<path d="M18 4.500a11 11 0 0 1 7.500 9"/><path d="M25 19a11 11 0 0 1-7 7"/><path d="M11 26a11 11 0 0 1-7.500-8"/><path d="M3.500 12a11 11 0 0 1 4-5.500"/></g>
<path d="M15 2l6 1-3 5z M28 12l-2 6-4-4z M9 29l-5-3 5-3z M2 19l1-6 4 4z" fill="#555"/>
<path d="M14.500 8l3.500 3.500h-2.200v2.300h2.300v-2.200l3.500 3.500-3.500 3.500v-2.200h-2.300v2.300h2.200l-3.500 3.500-3.500-3.500h2.200v-2.300h-2.300v2.200l-3.500-3.500 3.500-3.500v2.200h2.300v-2.300h-2.200z" fill="#4a4a4a"/>
<path d="M2 3.500h7M2 6.500h7" stroke="#555" stroke-width="1"/><path d="M9 1.500l3 2-3 2z M2 4.500l-2.500 2 2.500 2z" fill="#555"/>
<path d="M22.500 22v7M25.500 22v7" stroke="#555" stroke-width="1"/><path d="M20.500 25l2-3 2 3z M23.500 27l2 3 2-3z" fill="#555"/></g>
<rect x="140" y="425" width="40" height="34" fill="#e4e4e4"/>
<g transform="translate(147,433)" ><ellipse cx="13" cy="17.5" rx="10" ry="1.6" fill="#a8a8a8" opacity=".55" filter="url(#soft)"/><rect x="1" y="1" width="18" height="18" fill="none" stroke="#444" stroke-width="1.800"/></g>
<rect x="182" y="425" width="40" height="34" fill="#e4e4e4"/>
<g transform="translate(189,433)" ><ellipse cx="14" cy="17.5" rx="9" ry="1.6" fill="#a8a8a8" opacity=".55" filter="url(#soft)"/><circle cx="10" cy="10" r="9" fill="none" stroke="#444" stroke-width="1.800"/></g>
<rect x="14" y="461" width="40" height="34" fill="#e4e4e4"/>
<rect x="56" y="461" width="40" height="34" fill="#e4e4e4"/>
<rect x="98" y="461" width="40" height="34" fill="#e4e4e4"/>
<rect x="140" y="461" width="40" height="34" fill="#e4e4e4"/>
<rect x="182" y="461" width="33" height="34" fill="#e4e4e4"/>
<rect x="217" y="470" width="5" height="25" fill="#d2d2d2"/>
<path d="M217 462h5v1.500h-1v2.500l1.500 1.500h-2.500v3h-1v-3h-2.500l1.500-1.500v-2.500h-1z" fill="#000"/>
<g transform="translate(20,468)" ><ellipse cx="17" cy="17" rx="9" ry="1.6" fill="#a8a8a8" opacity=".55" filter="url(#soft)"/><path d="M1 2.500l9 6 10-6.500-5.500 12-4 3 1.500-4.500-2 2 4 6" fill="none" stroke="#444" stroke-width="1.600"/><path d="M1 2.500v9.500l9 9" fill="none" stroke="#444" stroke-width="1.600"/><path d="M14.500 14l-4 3.500 1.500-5z" fill="#444"/></g>
<g transform="translate(62,471.5)" ><ellipse cx="14" cy="14" rx="10" ry="1.6" fill="#a8a8a8" opacity=".55" filter="url(#soft)"/><ellipse cx="10" cy="7.800" rx="9.300" ry="7" fill="none" stroke="#444" stroke-width="1.800"/></g>
<g transform="translate(102.5,468)" ><ellipse cx="15" cy="18" rx="10" ry="1.6" fill="#a8a8a8" opacity=".55" filter="url(#soft)"/><path d="M12 1l11 8-4 12h-14l-4-12z" fill="none" stroke="#444" stroke-width="1.700"/></g>
<g transform="translate(146,469.5)" ><ellipse cx="15" cy="15" rx="10" ry="1.6" fill="#a8a8a8" opacity=".55" filter="url(#soft)"/><path d="M10.500 1l2.600 6.700 7.200 0.300-5.600 4.500 1.900 7-6.100-3.900-6.100 3.900 1.900-7-5.600-4.500 7.200-0.300z" fill="none" stroke="#444" stroke-width="1.600"/></g>
<g transform="translate(188,469)" ><ellipse cx="14" cy="16" rx="8" ry="1.6" fill="#a8a8a8" opacity=".55" filter="url(#soft)"/><path d="M2 4.500a9.500 9.500 0 0 1 15 11" fill="none" stroke="#444" stroke-width="1.800"/><circle cx="17" cy="16" r="1.200" fill="#888"/></g>
<g transform="translate(19.5,503)" ><path d="M3 17l20-2 0 2-20 1.500z" fill="#b8b8b8" opacity=".8"/>
<path d="M1.500 1.500h21v5h-7.500v12.500h3v3h-12v-3h3v-12.500h-7.500z" fill="#e8952a"/><path d="M9.500 6.500h2v12.500h-2z" fill="#f4bc6a"/>
<g fill="#282890"><circle cx="1.500" cy="1.500" r="1.300"/><circle cx="22.500" cy="1.500" r="1.300"/><circle cx="1.500" cy="7" r="1.300"/><circle cx="22.500" cy="7" r="1.300"/><circle cx="6" cy="22" r="1.300"/><circle cx="18" cy="22" r="1.300"/><circle cx="9" cy="22.500" r="1.300"/><circle cx="15" cy="22.500" r="1.300"/><circle cx="12" cy="1.200" r="1.300"/></g></g>
<rect x="56" y="497" width="40" height="34" fill="#e4e4e4"/>
<rect x="98" y="497" width="33" height="34" fill="#e4e4e4"/>
<rect x="133" y="506" width="5" height="25" fill="#d2d2d2"/>
<path d="M133 498h5v1.500h-1v2.500l1.500 1.500h-2.500v3h-1v-3h-2.500l1.500-1.500v-2.500h-1z" fill="#000"/>
<g transform="translate(59,504)" ><path d="M2 10l8-8 7 7-8 8z" fill="none" stroke="#a6a6a6" stroke-width="1.200"/><circle cx="10" cy="2" r="1" fill="#999"/><circle cx="2" cy="10" r="1" fill="#999"/>
<path d="M14 6q6-3 10 1 2 3 1 7l-6 4q-5 1-8-1z" fill="#d0d0d0" stroke="#bdbdbd" stroke-width=".8"/><path d="M3 18l20-2 3 1.500-20 2.500z" fill="#c4c4c4" opacity=".8"/></g>
<g transform="translate(101,504)" ><path d="M2 10l8-8 7 7-8 8z" fill="none" stroke="#a6a6a6" stroke-width="1.200"/><circle cx="10" cy="2" r="1" fill="#999"/><circle cx="2" cy="10" r="1" fill="#999"/>
<path d="M14 6q6-3 10 1 2 3 1 7l-6 4q-5 1-8-1z" fill="#dcdcdc" stroke="#bdbdbd" stroke-width=".8"/><path d="M3 18l20-2 3 1.500-20 2.500z" fill="#c4c4c4" opacity=".8"/></g>
<g transform="translate(143,503.5)" ><path d="M8 19l16-2 5 3-14 3z" fill="#b8b8b8" opacity=".6" filter="url(#soft)"/>
<path d="M14 16.500l4.500-3 10.500 5-2 3-11-2.500z" fill="#f6ea9c"/><path d="M26.500 18.500l2.500 1-1.500 2.500-2.500-1z" fill="#a0a0a0"/>
<path d="M17 17.200l1 1.800M20 17.800l1 2M23 18.500l1 2" stroke="#b0a040" stroke-width=".6"/>
<path d="M13 1.500q3-1 5 1.500l0.500 12.500q-1 2.500-4.500 2.500z" fill="#dca014"/><path d="M14.500 6q2.500 0 3 3v3.500q-1.500 1.500-3 1z" fill="#4048a4"/>
<path d="M18 10.500l3 1v3.500l-2.500-0.500z" fill="#a8a8b8"/>
<path d="M0.500 4.500q0-2.500 2.500-3l8-1.500q3 0 3 2.500l0.500 12q0 3-2.500 3.500l-8-1.500q-3-0.500-3-3z" fill="#f4bc20"/>
<path d="M1.800 6q5-2.500 10.800-1.500l0.300 6q-5.500-1.500-10.900 0.500z" fill="#2a2e6c"/><path d="M2 11q5.500-2 10.900-0.500l0.100 3.500q-5-1-10.500 0.500z" fill="#ecdce4"/></g>
<g transform="translate(184.5,501)" ><rect x="0.500" y="0.500" width="26.500" height="25.500" rx="3" fill="#0e8212" stroke="#9aec9a" stroke-width="1.500"/>
<path d="M10.500 4h6.500v6h6v6.500h-6v6h-6.500v-6h-6v-6.500h6z" fill="none" stroke="#b4f8b4" stroke-width="1.600"/></g>
<clipPath id="clipABC"><rect x="0" y="0" width="29" height="29"/></clipPath>
<g transform="translate(17,536)" clip-path="url(#clipABC)"><rect x="0" y="0" width="29" height="29" fill="#5aa85a"/><rect x="0" y="0" width="29" height="9" fill="#173a17"/><rect x="0" y="19" width="29" height="7" fill="#1d4a1d"/>
<rect x="1" y="7" width="25" height="11" fill="#a8dca0"/><rect x="1" y="25" width="25" height="4" fill="#a8dca0"/>
<circle cx="5" cy="4.500" r="2.200" fill="#000"/><rect x="10" y="2.500" width="3" height="4.500" fill="#000"/><path d="M15 7l4.500-5 4.500 5z" fill="#000"/>
<circle cx="5" cy="22.500" r="2.200" fill="#000"/><rect x="10" y="20.500" width="3" height="4.500" fill="#000"/><path d="M15 25l4.500-5 4.500 5z" fill="#000"/>
<rect x="26" y="0" width="1" height="29" fill="#0c2a0c"/><circle cx="29" cy="4.500" r="2" fill="#000"/><circle cx="29" cy="22.500" r="2" fill="#000"/>
<text x="2.500" y="17" font-family="Liberation Sans,sans-serif" font-size="10" fill="#0d3d0d" textLength="22" lengthAdjust="spacingAndGlyphs">ABC</text></g>
<g transform="translate(59,536.5)" ><path d="M1 1q13 3 26 0-3 13 1 25-14-3-27 0 4-12 0-25z" fill="#e0e0e0" stroke="#979797" stroke-width="1.300"/>
<g fill="none" stroke="#a2a2a2" stroke-width="1"><path d="M2 7.500q12 2 24 0M2.500 13.500h23M2.500 19.500q12-2 24 0M7.500 2q2 12 0 23.500M14 2.500v23M20.500 2q-2 12 0 23.500"/></g>
<circle cx="14" cy="13.500" r="8" fill="none" stroke="#b4b4b4" stroke-width="2.200"/></g>
<g transform="translate(100,539)" ><rect x="1" y="14" width="4.600" height="4.600" fill="none" stroke="#a6a6a6" stroke-width="1.500"/><rect x="8" y="14" width="4.600" height="4.600" fill="none" stroke="#a6a6a6" stroke-width="1.500"/><rect x="8" y="21" width="4.600" height="4.600" fill="none" stroke="#a6a6a6" stroke-width="1.500"/><circle cx="15" cy="3" r="2.500" fill="none" stroke="#a6a6a6" stroke-width="1.500"/><circle cx="27" cy="3" r="2.500" fill="none" stroke="#a6a6a6" stroke-width="1.500"/><circle cx="15" cy="10" r="2.500" fill="none" stroke="#a6a6a6" stroke-width="1.500"/><circle cx="27" cy="10" r="2.500" fill="none" stroke="#a6a6a6" stroke-width="1.500"/><circle cx="21" cy="14" r="2.500" fill="none" stroke="#a6a6a6" stroke-width="1.500"/><circle cx="21" cy="7" r=".8" fill="#aaa"/></g>
<g transform="translate(144.5,536.5)" ><rect x="1" y="1" width="3.500" height="3.500" fill="#fff" stroke="#000" stroke-width="1"/>
<path d="M3.500 20.500l7-7 5.500 5 3 3 5-4" fill="none" stroke="#222" stroke-width="1.800"/><path d="M16 19.500l3 4 3-3z" fill="#111"/><circle cx="3.5" cy="21" r="2.800" fill="#f4f4a0" stroke="#44441c" stroke-width=".9"/><path d="M2.0 21h3M3.5 19.5v3" stroke="#222" stroke-width=".8"/><circle cx="10.5" cy="13.5" r="2.800" fill="#f4f4a0" stroke="#44441c" stroke-width=".9"/><path d="M9.0 13.5h3M10.5 12.0v3" stroke="#222" stroke-width=".8"/><circle cx="16" cy="18.5" r="2.800" fill="#f4f4a0" stroke="#44441c" stroke-width=".9"/><path d="M14.5 18.5h3M16 17.0v3" stroke="#222" stroke-width=".8"/><circle cx="24" cy="17" r="2.800" fill="#f4f4a0" stroke="#44441c" stroke-width=".9"/><path d="M22.5 17h3M24 15.5v3" stroke="#222" stroke-width=".8"/></g>
<g transform="translate(184.5,538)" ><path d="M1 9l9-8 9 11 8-7" fill="none" stroke="#b0b0b0" stroke-width="1.300"/><path d="M12 6v6M10.500 10l1.500 2.500 1.500-2.500" stroke="#c4c4c4" stroke-width="1" fill="none"/>
<path d="M2 19q4-4 7 0t7 0 7 0 4-2M3 24q4-3 8 0t8-1 6 0" fill="none" stroke="#d6d6d6" stroke-width="1.200" stroke-dasharray="2 1.500"/></g>
<g transform="translate(16,571)" ><path d="M1.500 1.500q16 13 0 26" fill="none" stroke="#a0a0a0" stroke-width="1.700"/><path d="M1.500 1.500l14 3.500M1.500 27.500l14-3.500" stroke="#bcbcbc" stroke-width="1"/><path d="M13 14h12" stroke="#b4b4b4" stroke-width="1"/><path d="M20 12l3 2-3 2z" fill="#aaa"/>
<g fill="#9a9a9a"><rect x="0" y="0" width="3" height="3"/><rect x="0" y="26" width="3" height="3"/><rect x="14.500" y="3.500" width="3" height="3"/><rect x="14.500" y="22" width="3" height="3"/><rect x="19" y="0" width="3" height="3"/><rect x="19" y="26" width="3" height="3"/></g><rect x="27" y="12.500" width="3" height="3" fill="none" stroke="#999" stroke-width=".9"/></g>
<g transform="translate(58,571.5)" ><path d="M9 4.500l8 4-1 3M9 24l8-4-1-3" fill="none" stroke="#f6f6a8" stroke-width="5"/>
<path d="M1 1l8 3.500M1 27.500l8-3.500" stroke="#000" stroke-width="2.400"/><path d="M16 8l13 6.500-13 6.500" fill="none" stroke="#666" stroke-width="2.400"/><path d="M9 4.500l7 3.500M9 24l7-3.500" stroke="#d8d8a0" stroke-width="1" stroke-dasharray="1 1"/></g>
<g transform="translate(99.5,570.5)" ><path d="M7 25l17-18" stroke="#f8f8b0" stroke-width="6"/>
<path d="M0.500 20l9 9.500" stroke="#000" stroke-width="2.800"/><path d="M5 24.500l5-5" stroke="#000" stroke-width="2.600"/>
<path d="M20 1.500l10 10" stroke="#000" stroke-width="2.800"/><path d="M25 6.500l-5 5" stroke="#000" stroke-width="2.600"/>
<path d="M12 11.500l9 4.500M13 15.500l8-1.500" stroke="#fff" stroke-width="2.400"/><path d="M12 11.500l9 4.500M13 15.500l8-1.500" stroke="#000" stroke-width=".9"/>
<circle cx="23.500" cy="18" r="2" fill="#fff" stroke="#000" stroke-width="1.700"/><circle cx="26.500" cy="14" r="2" fill="#fff" stroke="#000" stroke-width="1.700"/></g>
<g transform="translate(143,574)" ><ellipse cx="14" cy="22" rx="13" ry="3.500" fill="#8a8a8a" opacity=".8" filter="url(#soft)"/>
<path d="M2 4q12 5 24 0l1.500 14q-1 5-13.500 5t-13.500-5z" fill="url(#gDish)"/><ellipse cx="14" cy="4" rx="12" ry="3.200" fill="#8484d8" stroke="#646464" stroke-width="1.200"/>
<path d="M3 14q11-7 22 0" fill="none" stroke="#c8c840" stroke-width="1.200"/><path d="M7 5l-3 12M21 5l3 12" stroke="#777" stroke-width="1"/><ellipse cx="14" cy="13" rx="2.500" ry="7" fill="#b8b8f4" opacity=".55"/></g>
<g transform="translate(184,570.5)" ><path d="M13 2q-10 8-11 19" fill="none" stroke="#c4c4c4" stroke-width="1.500" stroke-dasharray="5 2"/><path d="M14 2h10M12 11l7 4M3 22l3 7" stroke="#d2d2d2" stroke-width="1.200"/><path d="M22 0.500l3 1.500-3 1.500zM17 12.500l3 3-4 0zM4.500 27l2 3-3.500-1z" fill="#c8c8c8"/></g>
<g transform="translate(20,610)" ><path d="M9.500 0v27" stroke="#8a8a8a" stroke-width="1" stroke-dasharray="5 2 1.500 2"/><path d="M8 3q-5 1-3 8 1 4-2 6-3 3-2 8h8" fill="none" stroke="#8a8a8a" stroke-width="1.200"/>
<path d="M11 25q6-2 4-8 3-2 1-6" fill="none" stroke="#dcdcdc" stroke-width="1.200"/><path d="M12 16h5" stroke="#ccc" stroke-width="1"/></g>
<g transform="translate(58,607.5)" ><path d="M4 26l22-5 4 2-22 6z" fill="#a0a0a0" opacity=".6" filter="url(#soft)"/>
<path d="M1 12q0-2 2-3l8-4 9 8 9 5q1 1 0 3l-2 5-23 4.500q-2-1-2.500-4z" fill="#f0e010"/><path d="M2 25q8-6 26-7l-1.500 5.500-22.500 5z" fill="#d4c000"/>
<path d="M20.500 1l1.500 8.500 8 1.500-7 4.500 1.500 7.500-7.500-5-7 3.500 3-7.500-5-5.500h8z" fill="#f6ec30" stroke="#222" stroke-width="1.400"/></g>
<rect x="14" y="669" width="40" height="34" fill="#e4e4e4"/>
<rect x="56" y="669" width="40" height="34" fill="#e4e4e4"/>
<rect x="98" y="669" width="40" height="34" fill="#e4e4e4"/>
<rect x="140" y="669" width="40" height="34" fill="#e4e4e4"/>
<rect x="182" y="669" width="40" height="34" fill="#e4e4e4"/>
<g transform="translate(14,669)" ><path d="M2.5 4V31" stroke="#7c7c7c" stroke-width="1.100" stroke-dasharray="7 2"/><rect x="14" y="12" width="11" height="11" fill="none" stroke="#7c7c7c" stroke-width="1.400"/><path d="M6.5 17.5h5" stroke="#7c7c7c" stroke-width="1.300"/><path d="M5.5 17.5l3.500-3v6z" fill="#7c7c7c"/><path d="M17 21h12l-1 3h-11z" fill="#c6c6c6" opacity=".7"/></g>
<g transform="translate(56,669)" ><path d="M27.5 4V31" stroke="#7c7c7c" stroke-width="1.100" stroke-dasharray="7 2"/><rect x="4" y="12" width="11" height="11" fill="none" stroke="#7c7c7c" stroke-width="1.400"/><path d="M23.5 17.5h-5" stroke="#7c7c7c" stroke-width="1.300"/><path d="M24.5 17.5l-3.500-3v6z" fill="#7c7c7c"/><path d="M7 21h12l-1 3h-11z" fill="#c6c6c6" opacity=".7"/></g>
<g transform="translate(98,669)" ><path d="M3 5H30" stroke="#7c7c7c" stroke-width="1.100" stroke-dasharray="7 2"/><rect x="12" y="18" width="10" height="10" fill="none" stroke="#7c7c7c" stroke-width="1.400"/><path d="M17 8v5" stroke="#7c7c7c" stroke-width="1.300"/><path d="M17 7l-3 3.500h6z" fill="#7c7c7c"/><path d="M15 24h14l-1 3h-13z" fill="#c6c6c6" opacity=".7"/></g>
<g transform="translate(140,669)" ><path d="M2 30H28" stroke="#7c7c7c" stroke-width="1.100" stroke-dasharray="7 2"/><rect x="9" y="6" width="10" height="10" fill="none" stroke="#7c7c7c" stroke-width="1.400"/><path d="M15 26v-5" stroke="#7c7c7c" stroke-width="1.300"/><path d="M15 27l-3 3.500h6z" transform="rotate(180 15 27)" fill="#7c7c7c"/><path d="M18 20h8l-3 6h-8z" fill="#c0c0c0" opacity=".7"/></g>
<g transform="translate(182,669)" ><path d="M2.5 4V31" stroke="#7c7c7c" stroke-width="1.100" stroke-dasharray="7 2"/><path d="M28.5 4V31" stroke="#7c7c7c" stroke-width="1.100" stroke-dasharray="7 2"/><rect x="11" y="12" width="10" height="10" fill="none" stroke="#7c7c7c" stroke-width="1.400"/><path d="M5 17.500l3-3 3 3-3 3zM21 17.500l3-3 3 3-3 3z" fill="#7c7c7c"/><path d="M6 24h20l-1 3h-19z" fill="#c6c6c6" opacity=".7"/></g>
<clipPath id="clipPos"><rect x="0" y="700" width="270" height="21"/></clipPath><g clip-path="url(#clipPos)"><rect x="14" y="706" width="40" height="20" fill="#e4e4e4"/>
<rect x="56" y="706" width="40" height="20" fill="#e4e4e4"/>
<rect x="98" y="706" width="33" height="20" fill="#f6f6f6"/>
<rect x="133" y="714" width="5" height="12" fill="#d2d2d2"/>
<path d="M133 706h5v1.500h-1v2.500l1.500 1.500h-2.500v3h-1v-3h-2.500l1.500-1.500v-2.500h-1z" fill="#000"/>
<g transform="translate(14,706)" ><path d="M4 3.5H32" stroke="#7c7c7c" stroke-width="1.100" stroke-dasharray="7 2"/><rect x="12" y="12" width="10" height="10" fill="none" stroke="#7c7c7c" stroke-width="1.400"/><path d="M17 5l3 3-3 3-3-3z" fill="#7c7c7c"/></g>
<g transform="translate(56,706)" ><path d="M3 16V3.500h25V16" fill="none" stroke="#7c7c7c" stroke-width="1.100" stroke-dasharray="7 2"/><rect x="12" y="12" width="10" height="10" fill="none" stroke="#7c7c7c" stroke-width="1.400"/><path d="M17 5l3 3-3 3-3-3z" fill="#7c7c7c"/></g>
<g transform="translate(98,706)" ><path d="M3 16V3.500M28 16V3.500" fill="none" stroke="#7c7c7c" stroke-width="1.100" stroke-dasharray="2 2"/><rect x="11" y="12" width="10" height="10" fill="none" stroke="#7c7c7c" stroke-width="1.400"/><path d="M16 4v5" stroke="#7c7c7c" stroke-width="1.300"/><path d="M16 3l-3 3.500h6z" fill="#7c7c7c"/><path d="M2 15l2.500 2-2.500 2zM29 15l-2.500 2 2.500 2z" fill="#7c7c7c"/></g>
<g font-family="Liberation Sans,sans-serif" font-size="7.500" font-weight="bold" fill="#000"><text x="146.0" y="718.6" text-anchor="middle" transform="rotate(-62 146.0 718.6)">x</text><text x="150.4" y="713.9" text-anchor="middle" transform="rotate(-32 150.4 713.9)">a</text><text x="155.3" y="712.1" text-anchor="middle" transform="rotate(-8 155.3 712.1)">a</text><text x="162.9" y="713.5" text-anchor="middle" transform="rotate(28 162.9 713.5)">*</text><text x="167.8" y="718.2" text-anchor="middle" transform="rotate(60 167.8 718.2)">c</text></g>
<text x="186" y="719" font-family="Liberation Sans,sans-serif" font-size="13" font-weight="bold" letter-spacing="0.300" fill="#000">Nes</text><text x="190" y="728.500" font-family="Liberation Sans,sans-serif" font-size="12" font-weight="bold" fill="#000">nes</text></g>
<g transform="translate(308,51)" ><ellipse cx="13.300" cy="12.800" rx="3.300" ry="2.300" transform="rotate(38 13.300 12.800)" fill="#cfa56c"/><ellipse cx="13" cy="12.300" rx="2" ry="1.200" transform="rotate(38 13 12.300)" fill="#e6c898"/>
<circle cx="6.300" cy="6.200" r="5.600" fill="url(#gZoom)" stroke="#86a2bc" stroke-width="1.500"/><path d="M6.300 2.700v7M2.800 6.200h7" stroke="#1c4a8c" stroke-width="1.500"/></g>
<g transform="translate(331,51)" ><ellipse cx="13.300" cy="12.800" rx="3.300" ry="2.300" transform="rotate(38 13.300 12.800)" fill="#cfa56c"/><ellipse cx="13" cy="12.300" rx="2" ry="1.200" transform="rotate(38 13 12.300)" fill="#e6c898"/>
<circle cx="6.300" cy="6.200" r="5.600" fill="url(#gZoom)" stroke="#86a2bc" stroke-width="1.500"/><path d="M2.800 6.200h7" stroke="#1c4a8c" stroke-width="1.700"/></g>
<g transform="translate(354,51)" ><ellipse cx="13.300" cy="12.800" rx="3.300" ry="2.300" transform="rotate(38 13.300 12.800)" fill="#cfa56c"/><ellipse cx="13" cy="12.300" rx="2" ry="1.200" transform="rotate(38 13 12.300)" fill="#e6c898"/>
<circle cx="6.300" cy="6.200" r="5.600" fill="url(#gZoom)" stroke="#86a2bc" stroke-width="1.500"/><path d="M9.500 9a3.500 3.500 0 1 0-5-4.500" fill="none" stroke="#b0a020" stroke-width="1.700"/><path d="M2.500 3l4 0-1 3.500z" fill="#a09018"/></g>
<rect x="377" y="50" width="1" height="18" fill="#9c9c9c"/><rect x="378" y="50" width="1" height="18" fill="#fff"/>
<g transform="translate(385,51)" ><ellipse cx="13.300" cy="12.800" rx="3.300" ry="2.300" transform="rotate(38 13.300 12.800)" fill="#cfa56c"/><ellipse cx="13" cy="12.300" rx="2" ry="1.200" transform="rotate(38 13 12.300)" fill="#e6c898"/>
<circle cx="6.300" cy="6.200" r="5.600" fill="url(#gZoom)" stroke="#86a2bc" stroke-width="1.500"/><text x="2" y="9" font-family="Liberation Sans,sans-serif" font-size="6.500" font-weight="bold" fill="#6a8ab0">1:1</text></g>
<g transform="translate(408.5,51)" ><ellipse cx="13.300" cy="12.800" rx="3.300" ry="2.300" transform="rotate(38 13.300 12.800)" fill="#cfa56c"/><ellipse cx="13" cy="12.300" rx="2" ry="1.200" transform="rotate(38 13 12.300)" fill="#e6c898"/>
<circle cx="6.300" cy="6.200" r="5.600" fill="url(#gZoom)" stroke="#86a2bc" stroke-width="1.500"/><rect x="3" y="3.500" width="7.500" height="6" fill="#9cc4e0" stroke="#3c6ca8" stroke-width="1.200"/></g>
<g transform="translate(431,52)" ><path d="M1 6q0-5 5.500-5.500 4-0.500 6 2.500 2 2.500 0 5l3 2.500v2.500h-5l-1.500-2q-3 1-6-0.500-2-1.500-2-4.500z" fill="#9c9c9c"/></g>
<rect x="454" y="50" width="1" height="18" fill="#9c9c9c"/><rect x="455" y="50" width="1" height="18" fill="#fff"/>
<rect x="459" y="48" width="22.500" height="21.500" fill="#f8f8f8"/><path d="M459.500 69.500v-21h22" fill="none" stroke="#8a8a8a"/><path d="M459.500 69.500h22v-21" fill="none" stroke="#fff"/>
<rect x="482" y="48" width="22.500" height="21.500" fill="#f8f8f8"/><path d="M482.500 69.500v-21h22" fill="none" stroke="#8a8a8a"/><path d="M482.500 69.500h22v-21" fill="none" stroke="#fff"/>
<path d="M465 53.5h7" stroke="#333" stroke-width="1" stroke-dasharray="2 1"/><path d="M465 55.5h7" stroke="#333" stroke-width="1" stroke-dasharray="2 1"/><path d="M465 57.5h7" stroke="#333" stroke-width="1" stroke-dasharray="2 1"/><path d="M465 59.5h7" stroke="#333" stroke-width="1" stroke-dasharray="2 1"/><path d="M465 61.5h7" stroke="#333" stroke-width="1" stroke-dasharray="2 1"/><path d="M465 63.5h7" stroke="#333" stroke-width="1" stroke-dasharray="2 1"/><path d="M465 65.5h7" stroke="#333" stroke-width="1" stroke-dasharray="2 1"/>
<path d="M479 57.500h-4v-2.500l-5 4.500 5 4.500v-2.500h4z" fill="#555" stroke="#000" stroke-width="1"/>
<path d="M494.5 53.5h7" stroke="#333" stroke-width="1" stroke-dasharray="2 1"/><path d="M494.5 55.5h7" stroke="#333" stroke-width="1" stroke-dasharray="2 1"/><path d="M494.5 57.5h7" stroke="#333" stroke-width="1" stroke-dasharray="2 1"/><path d="M494.5 59.5h7" stroke="#333" stroke-width="1" stroke-dasharray="2 1"/><path d="M494.5 61.5h7" stroke="#333" stroke-width="1" stroke-dasharray="2 1"/><path d="M494.5 63.5h7" stroke="#333" stroke-width="1" stroke-dasharray="2 1"/><path d="M494.5 65.5h7" stroke="#333" stroke-width="1" stroke-dasharray="2 1"/>
<path d="M487 57.500h4v-2.500l5 4.500-5 4.500v-2.500h-4z" fill="#555" stroke="#000" stroke-width="1"/>
<g transform="translate(507.5,52.5)" ><path d="M10 9l5 3.500" stroke="#c49a60" stroke-width="2.600" stroke-linecap="round"/><circle cx="10" cy="5" r="4.300" fill="#c4d8f0" stroke="#90a8cc" stroke-width="1"/><path d="M0 5.500l7-5v2.500h4v5h-4v2.500z" fill="#6c8cd8"/></g>
<rect x="531" y="50" width="1" height="18" fill="#9c9c9c"/><rect x="532" y="50" width="1" height="18" fill="#fff"/>
<rect x="543" y="58" width="75" height="2" fill="#7c7c7c"/><rect x="543" y="60" width="75" height="1" fill="#fff"/>
<path d="M618 50h9.500v15.500l-4.700 4.500-4.800-4.500z" fill="#f2f2f2"/><path d="M627.500 50v15.500l-4.700 4.500" fill="none" stroke="#6a6a6a" stroke-width="1.200"/><path d="M618.500 66v-16h9" fill="none" stroke="#fff" stroke-width="1"/>
<g transform="translate(1104,91) scale(0.72)"><path d="M7 20l12-6v5l-8 4z" fill="#a9a9a9" opacity=".85" filter="url(#soft)"/>
<path d="M0 0.5h8.5l5.5 6v15.5h-14z" fill="url(#gDoc)"/><path d="M8.5 0.5l5.5 6h-5.5z" fill="#f4f7fb"/></g>
<g transform="translate(1140,92) scale(0.56)"><path d="M6 19l18-4 3 2-16 5z" fill="#a8a8a8" opacity=".8" filter="url(#soft)"/>
<path d="M1 3q0-2 2-2.3l8-0.7q2 0 3 2l1 1.5 4 0.5q1.5 0.2 1.5 2v8l-19 6z" fill="#ecd91c"/>
<path d="M2.5 21q-0.5-7 2.5-9 8-3 20-2.5 1.5 0.2 0.5 2-2 4-3.5 6-8 1-18.500 4.5z" fill="url(#gFold)"/>
<path d="M2.5 21q-0.5-7 2.5-9 8-3 20-2.500" fill="none" stroke="#c8b400" stroke-width=".7"/></g>
<g transform="translate(1177,92) scale(0.68)"><path d="M14 19l11-5v3l-9 5z" fill="#a8a8a8" opacity=".8" filter="url(#soft)"/>
<rect x="0" y="0.5" width="21" height="20.5" rx="1.500" fill="#1f55bd"/>
<rect x="4" y="1.5" width="13" height="9.500" fill="url(#gFlop)"/>
<rect x="4.500" y="13" width="12" height="8" fill="#c4c9cf"/>
<rect x="6.500" y="14.500" width="3.200" height="5.500" fill="#2a5fc4"/></g>
<g transform="translate(1213,91)" ><path d="M6 14l9-2 1.500 3-8 2z" fill="#aaa" opacity=".7" filter="url(#soft)"/><path d="M1.500 0.500h7l2 2.500 1.500 10h-10.500z" fill="#a98a62"/><path d="M4 2.500h7l2 3 1.500 9.500-9.500 0.500z" fill="#c2a47a" stroke="#8c7048" stroke-width=".5"/><path d="M4 4l-1.500 1 1.500 1-1.500 1 1.500 1-1.500 1 1.500 1-1.500 1 1.500 1" stroke="#7a603c" stroke-width=".6" fill="none"/></g>
<g transform="translate(1251.5,91)" ><path d="M0 0.500h8l3.500 3.500v12h-11.500z" fill="#8d9cb4"/><path d="M8 0.500l3.500 3.500h-3.500z" fill="#e8ecf4"/><g transform="translate(1.5,3) scale(0.85)">
<path d="M5 0q5 0 5 4.500 0 2-2 3.800l-0.500 1.200h-5l-0.500-1.200q-2-1.800-2-3.800 0-4.500 5-4.500z" fill="url(#gBulb)" stroke="#d49a1c" stroke-width=".5"/>
<path d="M2.800 9.300h4.400l-0.400 3.400h-3.600z" fill="#24160c"/><path d="M3.200 11.300h3.600" stroke="#c87820" stroke-width=".8"/></g></g>
<g transform="translate(1289,92)" ><ellipse cx="7" cy="13.500" rx="6" ry="1.600" fill="#aaa" opacity=".6"/><path d="M1 3.500h10l-1 10q-4 1.500-8 0z" fill="#4f92e4"/><path d="M3 4.500h2.500l-0.300 9h-1.500z" fill="#9ccaf6"/><ellipse cx="6" cy="3.300" rx="5.700" ry="2.200" fill="#3a72cc"/><ellipse cx="6" cy="3" rx="4" ry="1.200" fill="#a8d0f8"/></g>
<rect x="1323" y="90" width="17" height="17" fill="#f2eee0"/><path d="M1323 107v-17h17" fill="none" stroke="#b0a890" stroke-width="1"/><g transform="translate(1324.5,92.5) scale(0.95)">
<path d="M5 0q5 0 5 4.500 0 2-2 3.800l-0.500 1.200h-5l-0.500-1.200q-2-1.800-2-3.800 0-4.500 5-4.500z" fill="url(#gBulb)" stroke="#d49a1c" stroke-width=".5"/>
<path d="M2.800 9.300h4.400l-0.400 3.400h-3.600z" fill="#24160c"/><path d="M3.200 11.300h3.600" stroke="#c87820" stroke-width=".8"/></g><g transform="translate(1330,91) scale(0.95)">
<path d="M5 0q5 0 5 4.500 0 2-2 3.800l-0.500 1.200h-5l-0.500-1.200q-2-1.800-2-3.800 0-4.500 5-4.500z" fill="url(#gBulb)" stroke="#d49a1c" stroke-width=".5"/>
<path d="M2.800 9.300h4.400l-0.400 3.400h-3.600z" fill="#24160c"/><path d="M3.200 11.300h3.600" stroke="#c87820" stroke-width=".8"/></g>
<rect x="1106" y="117.500" width="16.500" height="16" fill="#eaeaea"/><path d="M1106.500 133.500h16v-16" fill="none" stroke="#aaa"/><circle cx="1114.500" cy="125.500" r="6.500" fill="#000"/>
<rect x="1287" y="117" width="17" height="16.500" fill="#e6e6e6"/><path d="M1287.500 133.500h16.500v-16" fill="none" stroke="#8c8c8c"/><g transform="translate(1290,119)" ><path d="M3 6v-2.500q0-3 3.500-3t3.500 3" fill="none" stroke="#a8a8a8" stroke-width="1.800"/><rect x="1.500" y="5.500" width="10" height="8" fill="#b4b4b4"/><path d="M6.500 12.500v-4M4.500 10l2-2 2 2" fill="none" stroke="#222" stroke-width="1.300"/></g>
<rect x="1306.500" y="117" width="16" height="16.500" fill="#ececec"/><path d="M1307 117v16h15.500" fill="none" stroke="#000" stroke-width="1" stroke-dasharray="1.500 1.500"/><path d="M1320 120l-7 7" stroke="#000" stroke-width="2.200"/><path d="M1309.500 130.500l1.500-8 6.500 6.500z" fill="#000"/>
<rect x="1323" y="117" width="17" height="16.500" fill="#e8e6da"/><path d="M1323.500 133.500v-16.500h16.500" fill="none" stroke="#b4ac94"/><g transform="translate(1327,119) scale(1.05)">
<path d="M5 0q5 0 5 4.500 0 2-2 3.800l-0.500 1.200h-5l-0.500-1.200q-2-1.800-2-3.800 0-4.500 5-4.500z" fill="url(#gBulb)" stroke="#d49a1c" stroke-width=".5"/>
<path d="M2.800 9.300h4.400l-0.400 3.400h-3.600z" fill="#24160c"/><path d="M3.200 11.300h3.600" stroke="#c87820" stroke-width=".8"/></g>
<rect x="1312" y="141" width="12" height="12" rx="1.500" fill="#1848a0"/><path d="M1318 150.5v-6.500M1315 147l3-3 3 3" fill="none" stroke="#fff" stroke-width="1.700"/><rect x="1330" y="141" width="12" height="12" rx="1.500" fill="#1848a0"/><path d="M1336 143.5v6.500M1333 147l3 3 3-3" fill="none" stroke="#fff" stroke-width="1.700"/>
<g transform="translate(1104,192) scale(0.72)"><path d="M7 20l12-6v5l-8 4z" fill="#a9a9a9" opacity=".85" filter="url(#soft)"/>
<path d="M0 0.5h8.5l5.5 6v15.5h-14z" fill="url(#gDoc)"/><path d="M8.5 0.5l5.5 6h-5.5z" fill="#f4f7fb"/></g>
<g transform="translate(1134,193) scale(0.56)"><path d="M6 19l18-4 3 2-16 5z" fill="#a8a8a8" opacity=".8" filter="url(#soft)"/>
<path d="M1 3q0-2 2-2.3l8-0.7q2 0 3 2l1 1.5 4 0.5q1.5 0.2 1.5 2v8l-19 6z" fill="#ecd91c"/>
<path d="M2.5 21q-0.5-7 2.5-9 8-3 20-2.5 1.5 0.2 0.5 2-2 4-3.5 6-8 1-18.500 4.5z" fill="url(#gFold)"/>
<path d="M2.5 21q-0.5-7 2.5-9 8-3 20-2.500" fill="none" stroke="#c8b400" stroke-width=".7"/></g>
<g transform="translate(1166,193) scale(0.68)"><path d="M14 19l11-5v3l-9 5z" fill="#a8a8a8" opacity=".8" filter="url(#soft)"/>
<rect x="0" y="0.5" width="21" height="20.5" rx="1.500" fill="#1f55bd"/>
<rect x="4" y="1.5" width="13" height="9.500" fill="url(#gFlop)"/>
<rect x="4.500" y="13" width="12" height="8" fill="#c4c9cf"/>
<rect x="6.500" y="14.500" width="3.200" height="5.500" fill="#2a5fc4"/></g>
<g transform="translate(1198,192)" ><path d="M6 14l9-2 1.500 3-8 2z" fill="#aaa" opacity=".7" filter="url(#soft)"/><path d="M1.500 0.500h7l2 2.500 1.500 10h-10.500z" fill="#a98a62"/><path d="M4 2.500h7l2 3 1.500 9.500-9.500 0.500z" fill="#c2a47a" stroke="#8c7048" stroke-width=".5"/><path d="M4 4l-1.500 1 1.500 1-1.500 1 1.500 1-1.500 1 1.500 1-1.500 1 1.500 1" stroke="#7a603c" stroke-width=".6" fill="none"/></g>
<g transform="translate(1230,193)" ><path d="M10 13l5-3v3l-3 2z" fill="#999" opacity=".8"/><rect x="0" y="0" width="12.500" height="13.500" fill="url(#gGray)"/></g>
<g transform="translate(1261,192) scale(0.62)"><rect x="0" y="0" width="16" height="16" fill="#b8b060"/><rect x="0" y="0" width="4" height="7" fill="#d8cc80"/><rect x="12" y="0" width="4" height="8" fill="#d8d088"/>
<path d="M3.500 5.500q0-5 4.500-5t4.500 5l1.500 6-1 4.500h-10l-1-5z" fill="#1a1208"/><ellipse cx="8" cy="5.500" rx="2.600" ry="3.300" fill="#e8bc80"/><path d="M5 11q3-2.500 6 0l0 3h-6z" fill="#d8a468"/><path d="M2.500 13.500q5.500-2 11 0v2.500h-11z" fill="#3a2810"/></g>
<path d="M1267 199h8l2.500 8h-11z" fill="#7c84d0"/><path d="M1266.500 207h11v1.500h-11z" fill="#5058a8"/>
<g transform="translate(1294.5,193)" ><ellipse cx="7" cy="13.500" rx="6" ry="1.600" fill="#aaa" opacity=".6"/><path d="M1 3.500h10l-1 10q-4 1.500-8 0z" fill="#4f92e4"/><path d="M3 4.500h2.500l-0.300 9h-1.500z" fill="#9ccaf6"/><ellipse cx="6" cy="3.300" rx="5.700" ry="2.200" fill="#3a72cc"/><ellipse cx="6" cy="3" rx="4" ry="1.200" fill="#a8d0f8"/></g>
<rect x="1323" y="191" width="17" height="17" fill="#f2eee0"/><path d="M1323 208v-17h17" fill="none" stroke="#b0a890" stroke-width="1"/><g transform="translate(1324.5,193.5) scale(0.95)">
<path d="M5 0q5 0 5 4.500 0 2-2 3.800l-0.500 1.200h-5l-0.500-1.200q-2-1.800-2-3.800 0-4.500 5-4.500z" fill="url(#gBulb)" stroke="#d49a1c" stroke-width=".5"/>
<path d="M2.800 9.300h4.400l-0.400 3.400h-3.600z" fill="#24160c"/><path d="M3.200 11.300h3.600" stroke="#c87820" stroke-width=".8"/></g><g transform="translate(1330,192) scale(0.95)">
<path d="M5 0q5 0 5 4.500 0 2-2 3.800l-0.500 1.200h-5l-0.500-1.200q-2-1.800-2-3.800 0-4.500 5-4.500z" fill="url(#gBulb)" stroke="#d49a1c" stroke-width=".5"/>
<path d="M2.800 9.300h4.400l-0.400 3.400h-3.600z" fill="#24160c"/><path d="M3.200 11.300h3.600" stroke="#c87820" stroke-width=".8"/></g>
<g transform="translate(1106,217) scale(1.0)"><rect x="0" y="0" width="16" height="16" fill="#b8b060"/><rect x="0" y="0" width="4" height="7" fill="#d8cc80"/><rect x="12" y="0" width="4" height="8" fill="#d8d088"/>
<path d="M3.500 5.500q0-5 4.500-5t4.500 5l1.500 6-1 4.500h-10l-1-5z" fill="#1a1208"/><ellipse cx="8" cy="5.500" rx="2.600" ry="3.300" fill="#e8bc80"/><path d="M5 11q3-2.500 6 0l0 3h-6z" fill="#d8a468"/><path d="M2.500 13.500q5.500-2 11 0v2.500h-11z" fill="#3a2810"/></g>
<g transform="translate(1104,298.5) scale(0.72)"><path d="M7 20l12-6v5l-8 4z" fill="#a9a9a9" opacity=".85" filter="url(#soft)"/>
<path d="M0 0.5h8.5l5.5 6v15.5h-14z" fill="url(#gDoc)"/><path d="M8.5 0.5l5.5 6h-5.5z" fill="#f4f7fb"/></g>
<g transform="translate(1129.5,299.5) scale(0.56)"><path d="M6 19l18-4 3 2-16 5z" fill="#a8a8a8" opacity=".8" filter="url(#soft)"/>
<path d="M1 3q0-2 2-2.3l8-0.7q2 0 3 2l1 1.5 4 0.5q1.5 0.2 1.5 2v8l-19 6z" fill="#ecd91c"/>
<path d="M2.5 21q-0.5-7 2.5-9 8-3 20-2.5 1.5 0.2 0.5 2-2 4-3.5 6-8 1-18.500 4.5z" fill="url(#gFold)"/>
<path d="M2.5 21q-0.5-7 2.5-9 8-3 20-2.500" fill="none" stroke="#c8b400" stroke-width=".7"/></g>
<g transform="translate(1157.5,299.5) scale(0.68)"><path d="M14 19l11-5v3l-9 5z" fill="#a8a8a8" opacity=".8" filter="url(#soft)"/>
<rect x="0" y="0.5" width="21" height="20.5" rx="1.500" fill="#1f55bd"/>
<rect x="4" y="1.5" width="13" height="9.500" fill="url(#gFlop)"/>
<rect x="4.500" y="13" width="12" height="8" fill="#c4c9cf"/>
<rect x="6.500" y="14.500" width="3.200" height="5.500" fill="#2a5fc4"/></g>
<g transform="translate(1186,298.5)" ><path d="M6 14l9-2 1.500 3-8 2z" fill="#aaa" opacity=".7" filter="url(#soft)"/><path d="M1.500 0.500h7l2 2.500 1.500 10h-10.500z" fill="#a98a62"/><path d="M4 2.500h7l2 3 1.500 9.500-9.500 0.500z" fill="#c2a47a" stroke="#8c7048" stroke-width=".5"/><path d="M4 4l-1.500 1 1.500 1-1.500 1 1.500 1-1.500 1 1.500 1-1.500 1 1.500 1" stroke="#7a603c" stroke-width=".6" fill="none"/></g>
<g transform="translate(1212.5,298.5)" ><path d="M1 10.500l8-3.500 8 3.500-8 4.500z" fill="#b81818"/><path d="M6.500 8.500h5v2.500h2l-4.500 3-4.500-3h2z" fill="#f4e0a0"/><path d="M1 4.500l8-4 8 4-8 4.500z" fill="#7c84e0"/></g>
<g transform="translate(1242.5,298.5)" ><path d="M0 0.500h8l3.500 3.500v12h-11.500z" fill="#9aa4b4"/><path d="M7 0a2.500 2.500 0 0 1 4 3" fill="none" stroke="#ddd" stroke-width="1"/><g transform="translate(1.5,3) scale(0.85)">
<path d="M5 0q5 0 5 4.500 0 2-2 3.800l-0.500 1.200h-5l-0.500-1.200q-2-1.800-2-3.800 0-4.500 5-4.500z" fill="url(#gBulb)" stroke="#d49a1c" stroke-width=".5"/>
<path d="M2.800 9.300h4.400l-0.400 3.400h-3.600z" fill="#24160c"/><path d="M3.200 11.300h3.600" stroke="#c87820" stroke-width=".8"/></g></g>
<rect x="1270" y="300" width="14" height="13.500" fill="#000"/><g transform="translate(1272.5,301) scale(0.6)" fill="#b0b0b0">
<circle cx="3.300" cy="2.300" r="2.300" fill="#b0b0b0"/><circle cx="11.700" cy="2.300" r="2.300" fill="#b0b0b0"/><ellipse cx="7.500" cy="5.500" rx="5" ry="4.300" fill="#b0b0b0"/>
<ellipse cx="7.500" cy="13.500" rx="6.500" ry="6.500"/><ellipse cx="1.500" cy="11" rx="2.300" ry="4" transform="rotate(25 1.500 11)"/><ellipse cx="13.500" cy="11" rx="2.300" ry="4" transform="rotate(-25 13.500 11)"/>
<ellipse cx="3.300" cy="18.700" rx="2.900" ry="2.200" fill="#b0b0b0"/><ellipse cx="11.700" cy="18.700" rx="2.900" ry="2.200" fill="#b0b0b0"/>
<ellipse cx="7.500" cy="14.300" rx="3.700" ry="3.900" fill="#707070"/></g><path d="M1281 303h2.400v0.800h-0.800v2.400h-0.800v-2.400h-0.800z" fill="#ddd"/>
<g transform="translate(1299,299.5)" ><ellipse cx="7" cy="13.500" rx="6" ry="1.600" fill="#aaa" opacity=".6"/><path d="M1 3.500h10l-1 10q-4 1.500-8 0z" fill="#4f92e4"/><path d="M3 4.500h2.500l-0.300 9h-1.500z" fill="#9ccaf6"/><ellipse cx="6" cy="3.300" rx="5.700" ry="2.200" fill="#3a72cc"/><ellipse cx="6" cy="3" rx="4" ry="1.200" fill="#a8d0f8"/></g>
<rect x="1323" y="298" width="17" height="17" fill="#f2eee0"/><path d="M1323 315v-17h17" fill="none" stroke="#b0a890" stroke-width="1"/><g transform="translate(1324.5,300.5) scale(0.95)">
<path d="M5 0q5 0 5 4.500 0 2-2 3.800l-0.500 1.200h-5l-0.500-1.200q-2-1.800-2-3.800 0-4.500 5-4.500z" fill="url(#gBulb)" stroke="#d49a1c" stroke-width=".5"/>
<path d="M2.800 9.300h4.400l-0.400 3.400h-3.600z" fill="#24160c"/><path d="M3.200 11.300h3.600" stroke="#c87820" stroke-width=".8"/></g><g transform="translate(1330,299) scale(0.95)">
<path d="M5 0q5 0 5 4.500 0 2-2 3.800l-0.500 1.200h-5l-0.500-1.200q-2-1.800-2-3.800 0-4.500 5-4.500z" fill="url(#gBulb)" stroke="#d49a1c" stroke-width=".5"/>
<path d="M2.800 9.300h4.400l-0.400 3.400h-3.600z" fill="#24160c"/><path d="M3.200 11.300h3.600" stroke="#c87820" stroke-width=".8"/></g>
<g transform="translate(1111,324)" ><path d="M2 10q1-9 10-9.500 7 0 8.500 9l-4.500 2.500q-1-7-6-6.500-4 0.500-5 6z" fill="#d8bc68"/><path d="M12 0.500q7 0 8.500 9l-2 1q-1.500-8-6.500-10z" fill="#f0dc98"/><path d="M5 12q1-5.500 5-6 5-0.500 6 6.500-5 2.500-11-0.500z" fill="#8488d0"/><path d="M2 17h7M5.500 13.500v7" stroke="#000" stroke-width="1.200"/></g>
<path d="M1139.500 330l4.500 3.500-4.500 3.500z" fill="#000"/>
<rect x="1323" y="324" width="17" height="17" fill="#e8e6da"/><path d="M1323.500 341v-16.500h16.500" fill="none" stroke="#b4ac94"/><g transform="translate(1327,326.5) scale(1.05)">
<path d="M5 0q5 0 5 4.500 0 2-2 3.800l-0.500 1.200h-5l-0.500-1.200q-2-1.800-2-3.800 0-4.500 5-4.500z" fill="url(#gBulb)" stroke="#d49a1c" stroke-width=".5"/>
<path d="M2.800 9.300h4.400l-0.400 3.400h-3.600z" fill="#24160c"/><path d="M3.200 11.300h3.600" stroke="#c87820" stroke-width=".8"/></g>
<rect x="1312" y="349.5" width="12" height="12" rx="1.500" fill="#1848a0"/><path d="M1318 359.0v-6.500M1315 355.5l3-3 3 3" fill="none" stroke="#fff" stroke-width="1.700"/><rect x="1330" y="349.5" width="12" height="12" rx="1.500" fill="#1848a0"/><path d="M1336 352.0v6.500M1333 355.5l3 3 3-3" fill="none" stroke="#fff" stroke-width="1.700"/>
<g fill="#000"><rect x="308" y="88" width="1" height="6"/><rect x="314" y="92" width="1" height="2"/><rect x="319" y="92" width="1" height="2"/><rect x="324" y="92" width="1" height="2"/><rect x="330" y="92" width="1" height="2"/><rect x="335" y="90" width="1" height="4"/><rect x="340" y="92" width="1" height="2"/><rect x="346" y="92" width="1" height="2"/><rect x="351" y="92" width="1" height="2"/><rect x="356" y="92" width="1" height="2"/><rect x="362" y="88" width="1" height="6"/><rect x="367" y="92" width="1" height="2"/><rect x="372" y="92" width="1" height="2"/><rect x="378" y="92" width="1" height="2"/><rect x="383" y="92" width="1" height="2"/><rect x="388" y="90" width="1" height="4"/><rect x="394" y="92" width="1" height="2"/><rect x="399" y="92" width="1" height="2"/><rect x="404" y="92" width="1" height="2"/><rect x="410" y="92" width="1" height="2"/><rect x="415" y="88" width="1" height="6"/><rect x="420" y="92" width="1" height="2"/><rect x="426" y="92" width="1" height="2"/><rect x="431" y="92" width="1" height="2"/><rect x="436" y="92" width="1" height="2"/><rect x="442" y="90" width="1" height="4"/><rect x="447" y="92" width="1" height="2"/><rect x="452" y="92" width="1" height="2"/><rect x="458" y="92" width="1" height="2"/><rect x="463" y="92" width="1" height="2"/><rect x="468" y="88" width="1" height="6"/><rect x="474" y="92" width="1" height="2"/><rect x="479" y="92" width="1" height="2"/><rect x="484" y="92" width="1" height="2"/><rect x="490" y="92" width="1" height="2"/><rect x="495" y="90" width="1" height="4"/><rect x="500" y="92" width="1" height="2"/><rect x="506" y="92" width="1" height="2"/><rect x="511" y="92" width="1" height="2"/><rect x="516" y="92" width="1" height="2"/><rect x="522" y="88" width="1" height="6"/><rect x="527" y="92" width="1" height="2"/><rect x="532" y="92" width="1" height="2"/><rect x="538" y="92" width="1" height="2"/><rect x="543" y="92" width="1" height="2"/><rect x="548" y="90" width="1" height="4"/><rect x="554" y="92" width="1" height="2"/><rect x="559" y="92" width="1" height="2"/><rect x="564" y="92" width="1" height="2"/><rect x="570" y="92" width="1" height="2"/><rect x="575" y="88" width="1" height="6"/><rect x="580" y="92" width="1" height="2"/><rect x="586" y="92" width="1" height="2"/><rect x="591" y="92" width="1" height="2"/><rect x="596" y="92" width="1" height="2"/><rect x="602" y="90" width="1" height="4"/><rect x="607" y="92" width="1" height="2"/><rect x="612" y="92" width="1" height="2"/><rect x="618" y="92" width="1" height="2"/><rect x="623" y="92" width="1" height="2"/><rect x="628" y="88" width="1" height="6"/><rect x="634" y="92" width="1" height="2"/><rect x="639" y="92" width="1" height="2"/><rect x="644" y="92" width="1" height="2"/><rect x="650" y="92" width="1" height="2"/><rect x="655" y="90" width="1" height="4"/><rect x="660" y="92" width="1" height="2"/><rect x="666" y="92" width="1" height="2"/><rect x="671" y="92" width="1" height="2"/><rect x="676" y="92" width="1" height="2"/><rect x="682" y="88" width="1" height="6"/><rect x="687" y="92" width="1" height="2"/><rect x="692" y="92" width="1" height="2"/><rect x="698" y="92" width="1" height="2"/><rect x="703" y="92" width="1" height="2"/><rect x="708" y="90" width="1" height="4"/><rect x="714" y="92" width="1" height="2"/><rect x="719" y="92" width="1" height="2"/><rect x="724" y="92" width="1" height="2"/><rect x="730" y="92" width="1" height="2"/><rect x="735" y="88" width="1" height="6"/><rect x="740" y="92" width="1" height="2"/><rect x="746" y="92" width="1" height="2"/><rect x="751" y="92" width="1" height="2"/><rect x="756" y="92" width="1" height="2"/><rect x="762" y="90" width="1" height="4"/><rect x="767" y="92" width="1" height="2"/><rect x="772" y="92" width="1" height="2"/><rect x="778" y="92" width="1" height="2"/><rect x="783" y="92" width="1" height="2"/><rect x="788" y="88" width="1" height="6"/><rect x="794" y="92" width="1" height="2"/><rect x="799" y="92" width="1" height="2"/><rect x="804" y="92" width="1" height="2"/><rect x="810" y="92" width="1" height="2"/><rect x="815" y="90" width="1" height="4"/><rect x="820" y="92" width="1" height="2"/><rect x="826" y="92" width="1" height="2"/><rect x="831" y="92" width="1" height="2"/><rect x="836" y="92" width="1" height="2"/><rect x="842" y="88" width="1" height="6"/><rect x="847" y="92" width="1" height="2"/><rect x="852" y="92" width="1" height="2"/><rect x="858" y="92" width="1" height="2"/><rect x="863" y="92" width="1" height="2"/><rect x="868" y="90" width="1" height="4"/><rect x="874" y="92" width="1" height="2"/><rect x="879" y="92" width="1" height="2"/><rect x="884" y="92" width="1" height="2"/><rect x="890" y="92" width="1" height="2"/><rect x="895" y="88" width="1" height="6"/><rect x="900" y="92" width="1" height="2"/><rect x="906" y="92" width="1" height="2"/><rect x="911" y="92" width="1" height="2"/><rect x="916" y="92" width="1" height="2"/><rect x="922" y="90" width="1" height="4"/><rect x="927" y="92" width="1" height="2"/><rect x="932" y="92" width="1" height="2"/><rect x="938" y="92" width="1" height="2"/><rect x="943" y="92" width="1" height="2"/><rect x="948" y="88" width="1" height="6"/><rect x="954" y="92" width="1" height="2"/><rect x="959" y="92" width="1" height="2"/><rect x="964" y="92" width="1" height="2"/><rect x="970" y="92" width="1" height="2"/><rect x="975" y="90" width="1" height="4"/><rect x="980" y="92" width="1" height="2"/><rect x="986" y="92" width="1" height="2"/><rect x="991" y="92" width="1" height="2"/><rect x="996" y="92" width="1" height="2"/><rect x="1002" y="88" width="1" height="6"/><rect x="1007" y="92" width="1" height="2"/><rect x="1012" y="92" width="1" height="2"/><rect x="1018" y="92" width="1" height="2"/><rect x="1023" y="92" width="1" height="2"/><rect x="1028" y="90" width="1" height="4"/><rect x="1034" y="92" width="1" height="2"/><rect x="1039" y="92" width="1" height="2"/><rect x="1044" y="92" width="1" height="2"/><rect x="1050" y="92" width="1" height="2"/><rect x="1055" y="88" width="1" height="6"/><rect x="1060" y="92" width="1" height="2"/><rect x="1066" y="92" width="1" height="2"/></g>
<g font-family="Liberation Sans,sans-serif" font-size="11" fill="#000"><text x="361.5" y="85.500" text-anchor="middle">-1200</text><text x="414.8" y="85.500" text-anchor="middle">-1000</text><text x="468.2" y="85.500" text-anchor="middle">-800</text><text x="521.5" y="85.500" text-anchor="middle">-600</text><text x="574.8" y="85.500" text-anchor="middle">-400</text><text x="628.2" y="85.500" text-anchor="middle">-200</text><text x="681.5" y="85.500" text-anchor="middle">0</text><text x="734.8" y="85.500" text-anchor="middle">200</text><text x="788.2" y="85.500" text-anchor="middle">400</text><text x="841.5" y="85.500" text-anchor="middle">600</text><text x="894.8" y="85.500" text-anchor="middle">800</text><text x="948.2" y="85.500" text-anchor="middle">1000</text><text x="1001.5" y="85.500" text-anchor="middle">1200</text></g>
<text x="1028" y="85" font-family="Liberation Sans,sans-serif" font-size="9" fill="#000" textLength="40" lengthAdjust="spacingAndGlyphs">millimetres</text>
<rect x="1069" y="75" width="1" height="19" fill="#000"/>
<rect x="1070" y="75" width="18" height="19.500" fill="#f0f0f0"/><path d="M1070.500 94v-18.500h17" fill="none" stroke="#fff"/><path d="M1071 94h16.500v-19" fill="none" stroke="#6c6c6c" stroke-width="1.200"/><path d="M1075 81.500h3M1080 81.500h3" stroke="#000" stroke-width="1"/><path d="M1075 84h8l-4 4z" fill="#000"/>
<g stroke="#9a9a9a" stroke-width="1" stroke-dasharray="1 1"><path d="M281 85.500h14M286.500 81v9M289.500 81v9"/></g>
<g fill="#000"><rect x="293" y="682" width="4" height="1"/><rect x="295" y="677" width="2" height="1"/><rect x="295" y="672" width="2" height="1"/><rect x="295" y="666" width="2" height="1"/><rect x="295" y="661" width="2" height="1"/><rect x="291" y="656" width="6" height="1"/><rect x="295" y="650" width="2" height="1"/><rect x="295" y="645" width="2" height="1"/><rect x="295" y="640" width="2" height="1"/><rect x="295" y="634" width="2" height="1"/><rect x="293" y="629" width="4" height="1"/><rect x="295" y="624" width="2" height="1"/><rect x="295" y="618" width="2" height="1"/><rect x="295" y="613" width="2" height="1"/><rect x="295" y="608" width="2" height="1"/><rect x="291" y="602" width="6" height="1"/><rect x="295" y="597" width="2" height="1"/><rect x="295" y="592" width="2" height="1"/><rect x="295" y="586" width="2" height="1"/><rect x="295" y="581" width="2" height="1"/><rect x="293" y="576" width="4" height="1"/><rect x="295" y="570" width="2" height="1"/><rect x="295" y="565" width="2" height="1"/><rect x="295" y="560" width="2" height="1"/><rect x="295" y="554" width="2" height="1"/><rect x="291" y="549" width="6" height="1"/><rect x="295" y="544" width="2" height="1"/><rect x="295" y="538" width="2" height="1"/><rect x="295" y="533" width="2" height="1"/><rect x="295" y="528" width="2" height="1"/><rect x="293" y="522" width="4" height="1"/><rect x="295" y="517" width="2" height="1"/><rect x="295" y="512" width="2" height="1"/><rect x="295" y="506" width="2" height="1"/><rect x="295" y="501" width="2" height="1"/><rect x="291" y="496" width="6" height="1"/><rect x="295" y="490" width="2" height="1"/><rect x="295" y="485" width="2" height="1"/><rect x="295" y="480" width="2" height="1"/><rect x="295" y="474" width="2" height="1"/><rect x="293" y="469" width="4" height="1"/><rect x="295" y="464" width="2" height="1"/><rect x="295" y="458" width="2" height="1"/><rect x="295" y="453" width="2" height="1"/><rect x="295" y="448" width="2" height="1"/><rect x="291" y="442" width="6" height="1"/><rect x="295" y="437" width="2" height="1"/><rect x="295" y="432" width="2" height="1"/><rect x="295" y="427" width="2" height="1"/><rect x="295" y="421" width="2" height="1"/><rect x="293" y="416" width="4" height="1"/><rect x="295" y="411" width="2" height="1"/><rect x="295" y="405" width="2" height="1"/><rect x="295" y="400" width="2" height="1"/><rect x="295" y="395" width="2" height="1"/><rect x="291" y="389" width="6" height="1"/><rect x="295" y="384" width="2" height="1"/><rect x="295" y="379" width="2" height="1"/><rect x="295" y="373" width="2" height="1"/><rect x="295" y="368" width="2" height="1"/><rect x="293" y="363" width="4" height="1"/><rect x="295" y="357" width="2" height="1"/><rect x="295" y="352" width="2" height="1"/><rect x="295" y="347" width="2" height="1"/><rect x="295" y="341" width="2" height="1"/><rect x="291" y="336" width="6" height="1"/><rect x="295" y="331" width="2" height="1"/><rect x="295" y="325" width="2" height="1"/><rect x="295" y="320" width="2" height="1"/><rect x="295" y="315" width="2" height="1"/><rect x="293" y="309" width="4" height="1"/><rect x="295" y="304" width="2" height="1"/><rect x="295" y="299" width="2" height="1"/><rect x="295" y="293" width="2" height="1"/><rect x="295" y="288" width="2" height="1"/><rect x="291" y="283" width="6" height="1"/><rect x="295" y="277" width="2" height="1"/><rect x="295" y="272" width="2" height="1"/><rect x="295" y="267" width="2" height="1"/><rect x="295" y="261" width="2" height="1"/><rect x="293" y="256" width="4" height="1"/><rect x="295" y="251" width="2" height="1"/><rect x="295" y="245" width="2" height="1"/><rect x="295" y="240" width="2" height="1"/><rect x="295" y="235" width="2" height="1"/><rect x="291" y="229" width="6" height="1"/><rect x="295" y="224" width="2" height="1"/><rect x="295" y="219" width="2" height="1"/><rect x="295" y="213" width="2" height="1"/><rect x="295" y="208" width="2" height="1"/><rect x="293" y="203" width="4" height="1"/><rect x="295" y="197" width="2" height="1"/><rect x="295" y="192" width="2" height="1"/><rect x="295" y="187" width="2" height="1"/><rect x="295" y="181" width="2" height="1"/><rect x="291" y="176" width="6" height="1"/><rect x="295" y="171" width="2" height="1"/><rect x="295" y="165" width="2" height="1"/><rect x="295" y="160" width="2" height="1"/><rect x="295" y="155" width="2" height="1"/><rect x="293" y="149" width="4" height="1"/><rect x="295" y="144" width="2" height="1"/><rect x="295" y="139" width="2" height="1"/><rect x="295" y="133" width="2" height="1"/><rect x="295" y="128" width="2" height="1"/><rect x="291" y="123" width="6" height="1"/><rect x="295" y="117" width="2" height="1"/><rect x="295" y="112" width="2" height="1"/><rect x="295" y="107" width="2" height="1"/><rect x="295" y="101" width="2" height="1"/><rect x="293" y="96" width="4" height="1"/></g>
<g font-family="Liberation Sans,sans-serif" font-size="11" fill="#000"><text x="0" y="0" text-anchor="middle" transform="translate(289.500 655.7) rotate(-90)">-1000</text><text x="0" y="0" text-anchor="middle" transform="translate(289.500 602.4) rotate(-90)">-800</text><text x="0" y="0" text-anchor="middle" transform="translate(289.500 549.1) rotate(-90)">-600</text><text x="0" y="0" text-anchor="middle" transform="translate(289.500 495.8) rotate(-90)">-400</text><text x="0" y="0" text-anchor="middle" transform="translate(289.500 442.5) rotate(-90)">-200</text><text x="0" y="0" text-anchor="middle" transform="translate(289.500 389.2) rotate(-90)">0</text><text x="0" y="0" text-anchor="middle" transform="translate(289.500 335.9) rotate(-90)">200</text><text x="0" y="0" text-anchor="middle" transform="translate(289.500 282.6) rotate(-90)">400</text><text x="0" y="0" text-anchor="middle" transform="translate(289.500 229.3) rotate(-90)">600</text><text x="0" y="0" text-anchor="middle" transform="translate(289.500 176.0) rotate(-90)">800</text><text x="0" y="0" text-anchor="middle" transform="translate(289.500 122.7) rotate(-90)">1000</text></g>
<rect x="278" y="590" width="19" height="1" fill="#000"/>
<path d="M1076 106.500l3.500-3.500 3.500 3.500" fill="none" stroke="#484848" stroke-width="2.200"/>
<path d="M1076 675l3.500 3.500 3.500-3.500" fill="none" stroke="#484848" stroke-width="2.200"/>
<path d="M308 690l-3.500 3.500 3.500 3.500" fill="none" stroke="#484848" stroke-width="2.200"/>
<path d="M1061.500 690l3.500 3.500-3.500 3.500" fill="none" stroke="#484848" stroke-width="2.200"/>
<path d="M1076 718.500l3.500-3.500 3.500 3.500" fill="none" stroke="#484848" stroke-width="2.200"/>
<path d="M1076 736.500l3.500 3.500 3.500-3.500" fill="none" stroke="#484848" stroke-width="2.200"/>
<rect x="278" y="685" width="19" height="17" fill="#f0f0f0"/><path d="M278.500 702v-16.500h18.500" fill="none" stroke="#fff"/><path d="M278.500 701.500h18v-16.500" fill="none" stroke="#777"/><path d="M284.500 690v2M284.500 695v2" stroke="#000" stroke-width="1"/><path d="M287.500 689.500l4.500 4-4.500 4z" fill="#000"/>
<defs><pattern id="dia" x="616.400" y="181.400" width="10" height="10" patternUnits="userSpaceOnUse">
<rect width="10" height="10" fill="#1c1c1c"/>
<g stroke="#101010" stroke-width=".8"><path d="M5 0l5 5-5 5-5-5z" fill="url(#gDia)"/><path d="M0 -5l5 5-5 5-5-5z" fill="url(#gDia)"/><path d="M10 -5l5 5-5 5-5-5z" fill="url(#gDia)"/><path d="M0 5l5 5-5 5-5-5z" fill="url(#gDia)"/><path d="M10 5l5 5-5 5-5-5z" fill="url(#gDia)"/></g>
<g fill="#ffffff"><ellipse cx="0" cy="3.200" rx=".95" ry="1.300"/><ellipse cx="10" cy="3.200" rx=".95" ry="1.300"/><ellipse cx="5" cy="8.200" rx=".95" ry="1.300"/><ellipse cx="5" cy="-1.800" rx=".95" ry="1.300"/></g>
</pattern>
<linearGradient id="gDia" x1="0" y1="0" x2="0" y2="1"><stop offset="0" stop-color="#dcdcdc"/><stop offset="0.450" stop-color="#8a8a8a"/><stop offset="1" stop-color="#161616"/></linearGradient>
<radialGradient id="gFlower"><stop offset="0" stop-color="#fff"/><stop offset="0.500" stop-color="#d8d8e0"/><stop offset="1" stop-color="#888"/></radialGradient>
<linearGradient id="gPetal" x1="0" y1="0" x2="0" y2="1"><stop offset="0" stop-color="#c4c0cc"/><stop offset="0.600" stop-color="#f4f4f4"/><stop offset="1" stop-color="#555"/></linearGradient>
</defs>
<path d="M614.00 179.50L671.00 179.50L671.00 193.00L667.00 196.50C640.00 206.00 620.00 229.00 617.50 255.50L614.00 251.50z" fill="url(#dia)"/>
<path d="M614.00 179.50L671.00 179.50" stroke="#222" stroke-width="1" stroke-dasharray="2.500 1"/>
<path d="M667.50 196.00C640.00 206.00 620.00 229.00 617.00 256.00" fill="none" stroke="#8a8a8a" stroke-width="5"/>
<path d="M667.50 196.00C640.00 206.00 620.00 229.00 617.00 256.00" fill="none" stroke="#d8d8d8" stroke-width="3.200"/>
<path d="M667.50 196.00C640.00 206.00 620.00 229.00 617.00 256.00" fill="none" stroke="#a4a4a4" stroke-width=".6"/>
<path d="M618.50 254.50C621.00 228.00 640.00 205.50 667.00 197.50L667.00 231.00C636.00 228.00 622.00 240.50 618.50 254.50z" fill="#3d3d3d"/>
<path d="M618.50 254.50C621.03 228.42 639.87 206.25 667.00 198.62L667.00 231.00C636.00 228.00 622.00 240.50 618.50 254.50z" fill="#545454"/>
<path d="M618.50 254.50C621.07 228.83 639.73 207.00 667.00 199.73L667.00 231.00C636.00 228.00 622.00 240.50 618.50 254.50z" fill="#696969"/>
<path d="M618.50 254.50C621.10 229.25 639.60 207.75 667.00 200.85L667.00 231.00C636.00 228.00 622.00 240.50 618.50 254.50z" fill="#7d7d7d"/>
<path d="M618.50 254.50C621.13 229.67 639.47 208.50 667.00 201.97L667.00 231.00C636.00 228.00 622.00 240.50 618.50 254.50z" fill="#909090"/>
<path d="M618.50 254.50C621.17 230.08 639.33 209.25 667.00 203.08L667.00 231.00C636.00 228.00 622.00 240.50 618.50 254.50z" fill="#a3a3a3"/>
<path d="M618.50 254.50C621.20 230.50 639.20 210.00 667.00 204.20L667.00 231.00C636.00 228.00 622.00 240.50 618.50 254.50z" fill="#b5b5b5"/>
<path d="M618.50 254.50C621.23 230.92 639.07 210.75 667.00 205.32L667.00 231.00C636.00 228.00 622.00 240.50 618.50 254.50z" fill="#c7c7c7"/>
<path d="M618.50 254.50C621.27 231.33 638.93 211.50 667.00 206.43L667.00 231.00C636.00 228.00 622.00 240.50 618.50 254.50z" fill="#d9d9d9"/>
<path d="M618.50 254.50C621.30 231.75 638.80 212.25 667.00 207.55L667.00 231.00C636.00 228.00 622.00 240.50 618.50 254.50z" fill="#ebebeb"/>
<path d="M618.50 254.50C621.33 232.17 638.67 213.00 667.00 208.67L667.00 231.00C636.00 228.00 622.00 240.50 618.50 254.50z" fill="#3d3d3d"/>
<path d="M618.50 254.50C621.37 232.58 638.53 213.75 667.00 209.78L667.00 231.00C636.00 228.00 622.00 240.50 618.50 254.50z" fill="#545454"/>
<path d="M618.50 254.50C621.40 233.00 638.40 214.50 667.00 210.90L667.00 231.00C636.00 228.00 622.00 240.50 618.50 254.50z" fill="#696969"/>
<path d="M618.50 254.50C621.43 233.42 638.27 215.25 667.00 212.02L667.00 231.00C636.00 228.00 622.00 240.50 618.50 254.50z" fill="#7d7d7d"/>
<path d="M618.50 254.50C621.47 233.83 638.13 216.00 667.00 213.13L667.00 231.00C636.00 228.00 622.00 240.50 618.50 254.50z" fill="#909090"/>
<path d="M618.50 254.50C621.50 234.25 638.00 216.75 667.00 214.25L667.00 231.00C636.00 228.00 622.00 240.50 618.50 254.50z" fill="#a3a3a3"/>
<path d="M618.50 254.50C621.53 234.67 637.87 217.50 667.00 215.37L667.00 231.00C636.00 228.00 622.00 240.50 618.50 254.50z" fill="#b5b5b5"/>
<path d="M618.50 254.50C621.57 235.08 637.73 218.25 667.00 216.48L667.00 231.00C636.00 228.00 622.00 240.50 618.50 254.50z" fill="#c7c7c7"/>
<path d="M618.50 254.50C621.60 235.50 637.60 219.00 667.00 217.60L667.00 231.00C636.00 228.00 622.00 240.50 618.50 254.50z" fill="#d9d9d9"/>
<path d="M618.50 254.50C621.63 235.92 637.47 219.75 667.00 218.72L667.00 231.00C636.00 228.00 622.00 240.50 618.50 254.50z" fill="#ebebeb"/>
<path d="M618.50 254.50C621.67 236.33 637.33 220.50 667.00 219.83L667.00 231.00C636.00 228.00 622.00 240.50 618.50 254.50z" fill="#3d3d3d"/>
<path d="M618.50 254.50C621.70 236.75 637.20 221.25 667.00 220.95L667.00 231.00C636.00 228.00 622.00 240.50 618.50 254.50z" fill="#545454"/>
<path d="M618.50 254.50C621.73 237.17 637.07 222.00 667.00 222.07L667.00 231.00C636.00 228.00 622.00 240.50 618.50 254.50z" fill="#696969"/>
<path d="M618.50 254.50C621.77 237.58 636.93 222.75 667.00 223.18L667.00 231.00C636.00 228.00 622.00 240.50 618.50 254.50z" fill="#7d7d7d"/>
<path d="M618.50 254.50C621.80 238.00 636.80 223.50 667.00 224.30L667.00 231.00C636.00 228.00 622.00 240.50 618.50 254.50z" fill="#909090"/>
<path d="M618.50 254.50C621.83 238.42 636.67 224.25 667.00 225.42L667.00 231.00C636.00 228.00 622.00 240.50 618.50 254.50z" fill="#a3a3a3"/>
<path d="M618.50 254.50C621.87 238.83 636.53 225.00 667.00 226.53L667.00 231.00C636.00 228.00 622.00 240.50 618.50 254.50z" fill="#b5b5b5"/>
<path d="M618.50 254.50C621.90 239.25 636.40 225.75 667.00 227.65L667.00 231.00C636.00 228.00 622.00 240.50 618.50 254.50z" fill="#c7c7c7"/>
<path d="M618.50 254.50C621.93 239.67 636.27 226.50 667.00 228.77L667.00 231.00C636.00 228.00 622.00 240.50 618.50 254.50z" fill="#d9d9d9"/>
<path d="M618.50 254.50C621.97 240.08 636.13 227.25 667.00 229.88L667.00 231.00C636.00 228.00 622.00 240.50 618.50 254.50z" fill="#ebebeb"/>
<path d="M671.50 339.00L614.50 339.00L614.50 325.50L618.50 322.00C645.50 312.50 665.50 289.50 668.00 263.00L671.50 267.00z" fill="url(#dia)"/>
<path d="M671.50 339.00L614.50 339.00" stroke="#222" stroke-width="1" stroke-dasharray="2.500 1"/>
<path d="M618.00 322.50C645.50 312.50 665.50 289.50 668.50 262.50" fill="none" stroke="#8a8a8a" stroke-width="5"/>
<path d="M618.00 322.50C645.50 312.50 665.50 289.50 668.50 262.50" fill="none" stroke="#d8d8d8" stroke-width="3.200"/>
<path d="M618.00 322.50C645.50 312.50 665.50 289.50 668.50 262.50" fill="none" stroke="#a4a4a4" stroke-width=".6"/>
<path d="M667.00 264.00C664.50 290.50 645.50 313.00 618.50 321.00L618.50 287.50C649.50 290.50 663.50 278.00 667.00 264.00z" fill="#fbfbfb"/>
<path d="M667.00 264.00C664.47 290.08 645.63 312.25 618.50 319.88L618.50 287.50C649.50 290.50 663.50 278.00 667.00 264.00z" fill="#eaeaea"/>
<path d="M667.00 264.00C664.43 289.67 645.77 311.50 618.50 318.77L618.50 287.50C649.50 290.50 663.50 278.00 667.00 264.00z" fill="#d8d8d8"/>
<path d="M667.00 264.00C664.40 289.25 645.90 310.75 618.50 317.65L618.50 287.50C649.50 290.50 663.50 278.00 667.00 264.00z" fill="#c6c6c6"/>
<path d="M667.00 264.00C664.37 288.83 646.03 310.00 618.50 316.53L618.50 287.50C649.50 290.50 663.50 278.00 667.00 264.00z" fill="#b4b4b4"/>
<path d="M667.00 264.00C664.33 288.42 646.17 309.25 618.50 315.42L618.50 287.50C649.50 290.50 663.50 278.00 667.00 264.00z" fill="#a2a2a2"/>
<path d="M667.00 264.00C664.30 288.00 646.30 308.50 618.50 314.30L618.50 287.50C649.50 290.50 663.50 278.00 667.00 264.00z" fill="#8f8f8f"/>
<path d="M667.00 264.00C664.27 287.58 646.43 307.75 618.50 313.18L618.50 287.50C649.50 290.50 663.50 278.00 667.00 264.00z" fill="#7c7c7c"/>
<path d="M667.00 264.00C664.23 287.17 646.57 307.00 618.50 312.07L618.50 287.50C649.50 290.50 663.50 278.00 667.00 264.00z" fill="#686868"/>
<path d="M667.00 264.00C664.20 286.75 646.70 306.25 618.50 310.95L618.50 287.50C649.50 290.50 663.50 278.00 667.00 264.00z" fill="#535353"/>
<path d="M667.00 264.00C664.17 286.33 646.83 305.50 618.50 309.83L618.50 287.50C649.50 290.50 663.50 278.00 667.00 264.00z" fill="#fbfbfb"/>
<path d="M667.00 264.00C664.13 285.92 646.97 304.75 618.50 308.72L618.50 287.50C649.50 290.50 663.50 278.00 667.00 264.00z" fill="#eaeaea"/>
<path d="M667.00 264.00C664.10 285.50 647.10 304.00 618.50 307.60L618.50 287.50C649.50 290.50 663.50 278.00 667.00 264.00z" fill="#d8d8d8"/>
<path d="M667.00 264.00C664.07 285.08 647.23 303.25 618.50 306.48L618.50 287.50C649.50 290.50 663.50 278.00 667.00 264.00z" fill="#c6c6c6"/>
<path d="M667.00 264.00C664.03 284.67 647.37 302.50 618.50 305.37L618.50 287.50C649.50 290.50 663.50 278.00 667.00 264.00z" fill="#b4b4b4"/>
<path d="M667.00 264.00C664.00 284.25 647.50 301.75 618.50 304.25L618.50 287.50C649.50 290.50 663.50 278.00 667.00 264.00z" fill="#a2a2a2"/>
<path d="M667.00 264.00C663.97 283.83 647.63 301.00 618.50 303.13L618.50 287.50C649.50 290.50 663.50 278.00 667.00 264.00z" fill="#8f8f8f"/>
<path d="M667.00 264.00C663.93 283.42 647.77 300.25 618.50 302.02L618.50 287.50C649.50 290.50 663.50 278.00 667.00 264.00z" fill="#7c7c7c"/>
<path d="M667.00 264.00C663.90 283.00 647.90 299.50 618.50 300.90L618.50 287.50C649.50 290.50 663.50 278.00 667.00 264.00z" fill="#686868"/>
<path d="M667.00 264.00C663.87 282.58 648.03 298.75 618.50 299.78L618.50 287.50C649.50 290.50 663.50 278.00 667.00 264.00z" fill="#535353"/>
<path d="M667.00 264.00C663.83 282.17 648.17 298.00 618.50 298.67L618.50 287.50C649.50 290.50 663.50 278.00 667.00 264.00z" fill="#fbfbfb"/>
<path d="M667.00 264.00C663.80 281.75 648.30 297.25 618.50 297.55L618.50 287.50C649.50 290.50 663.50 278.00 667.00 264.00z" fill="#eaeaea"/>
<path d="M667.00 264.00C663.77 281.33 648.43 296.50 618.50 296.43L618.50 287.50C649.50 290.50 663.50 278.00 667.00 264.00z" fill="#d8d8d8"/>
<path d="M667.00 264.00C663.73 280.92 648.57 295.75 618.50 295.32L618.50 287.50C649.50 290.50 663.50 278.00 667.00 264.00z" fill="#c6c6c6"/>
<path d="M667.00 264.00C663.70 280.50 648.70 295.00 618.50 294.20L618.50 287.50C649.50 290.50 663.50 278.00 667.00 264.00z" fill="#b4b4b4"/>
<path d="M667.00 264.00C663.67 280.08 648.83 294.25 618.50 293.08L618.50 287.50C649.50 290.50 663.50 278.00 667.00 264.00z" fill="#a2a2a2"/>
<path d="M667.00 264.00C663.63 279.67 648.97 293.50 618.50 291.97L618.50 287.50C649.50 290.50 663.50 278.00 667.00 264.00z" fill="#8f8f8f"/>
<path d="M667.00 264.00C663.60 279.25 649.10 292.75 618.50 290.85L618.50 287.50C649.50 290.50 663.50 278.00 667.00 264.00z" fill="#7c7c7c"/>
<path d="M667.00 264.00C663.57 278.83 649.23 292.00 618.50 289.73L618.50 287.50C649.50 290.50 663.50 278.00 667.00 264.00z" fill="#686868"/>
<path d="M667.00 264.00C663.53 278.42 649.37 291.25 618.50 288.62L618.50 287.50C649.50 290.50 663.50 278.00 667.00 264.00z" fill="#535353"/>
<circle cx="643.3" cy="259.7" r="18.600" fill="none" stroke="#b4aeb8" stroke-width="2"/>
<circle cx="643.3" cy="259.7" r="15.800" fill="none" stroke="#333" stroke-width="1" stroke-dasharray="1 4"/>
<circle cx="643.3" cy="259.7" r="10.500" fill="#8c8894"/>
<ellipse cx="643.3" cy="252.5" rx="2.300" ry="4.400" fill="url(#gPetal)" stroke="#4a4a4a" stroke-width=".5" transform="rotate(0 643.3 259.7)"/><ellipse cx="643.3" cy="252.5" rx="2.300" ry="4.400" fill="url(#gPetal)" stroke="#4a4a4a" stroke-width=".5" transform="rotate(30 643.3 259.7)"/><ellipse cx="643.3" cy="252.5" rx="2.300" ry="4.400" fill="url(#gPetal)" stroke="#4a4a4a" stroke-width=".5" transform="rotate(60 643.3 259.7)"/><ellipse cx="643.3" cy="252.5" rx="2.300" ry="4.400" fill="url(#gPetal)" stroke="#4a4a4a" stroke-width=".5" transform="rotate(90 643.3 259.7)"/><ellipse cx="643.3" cy="252.5" rx="2.300" ry="4.400" fill="url(#gPetal)" stroke="#4a4a4a" stroke-width=".5" transform="rotate(120 643.3 259.7)"/><ellipse cx="643.3" cy="252.5" rx="2.300" ry="4.400" fill="url(#gPetal)" stroke="#4a4a4a" stroke-width=".5" transform="rotate(150 643.3 259.7)"/><ellipse cx="643.3" cy="252.5" rx="2.300" ry="4.400" fill="url(#gPetal)" stroke="#4a4a4a" stroke-width=".5" transform="rotate(180 643.3 259.7)"/><ellipse cx="643.3" cy="252.5" rx="2.300" ry="4.400" fill="url(#gPetal)" stroke="#4a4a4a" stroke-width=".5" transform="rotate(210 643.3 259.7)"/><ellipse cx="643.3" cy="252.5" rx="2.300" ry="4.400" fill="url(#gPetal)" stroke="#4a4a4a" stroke-width=".5" transform="rotate(240 643.3 259.7)"/><ellipse cx="643.3" cy="252.5" rx="2.300" ry="4.400" fill="url(#gPetal)" stroke="#4a4a4a" stroke-width=".5" transform="rotate(270 643.3 259.7)"/><ellipse cx="643.3" cy="252.5" rx="2.300" ry="4.400" fill="url(#gPetal)" stroke="#4a4a4a" stroke-width=".5" transform="rotate(300 643.3 259.7)"/><ellipse cx="643.3" cy="252.5" rx="2.300" ry="4.400" fill="url(#gPetal)" stroke="#4a4a4a" stroke-width=".5" transform="rotate(330 643.3 259.7)"/>
<circle cx="643.3" cy="259.7" r="4.600" fill="#222"/><circle cx="643.3" cy="259.7" r="3.200" fill="url(#gFlower)"/></svg>
</div></body></html>
